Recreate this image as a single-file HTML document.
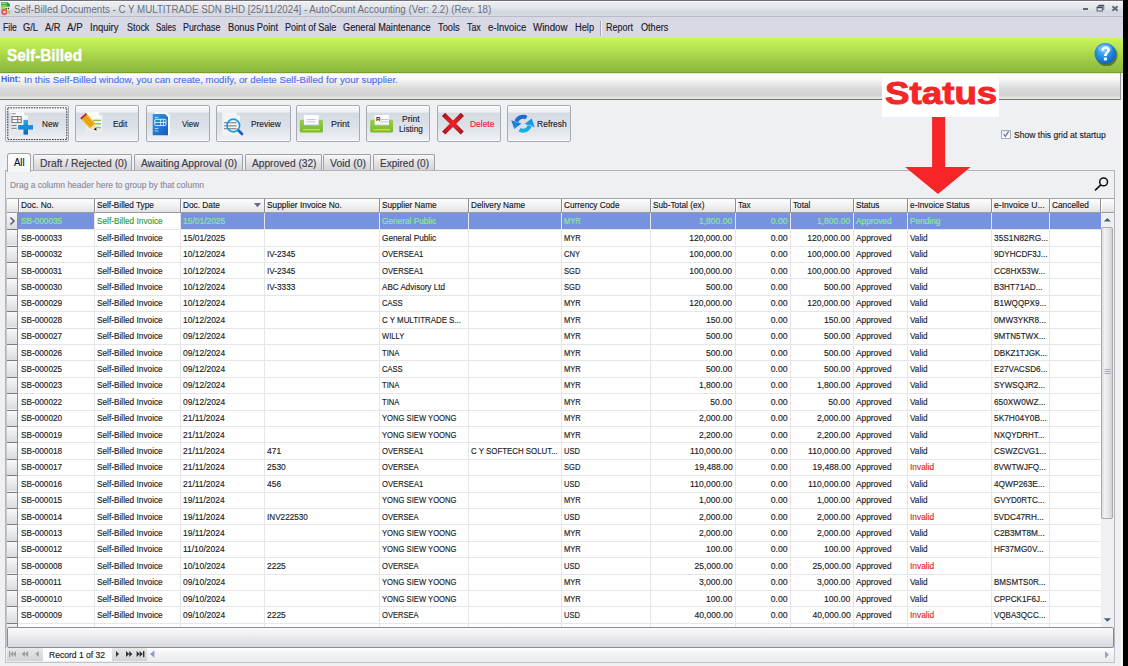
<!DOCTYPE html>
<html><head><meta charset="utf-8"><title>Self-Billed</title><style>
html,body{margin:0;padding:0;}
body{width:1128px;height:666px;overflow:hidden;position:relative;background:#eff0f3;font-family:"Liberation Sans",sans-serif;}
.a{position:absolute;}
.t{position:absolute;white-space:nowrap;line-height:normal;z-index:3;}
.g{-webkit-text-stroke:0.15px currentColor;}
svg{position:absolute;overflow:visible;}
</style></head><body>
<div class="a" style="left:0px;top:0px;width:1123px;height:17px;background:linear-gradient(#eeeff2,#e6e8ec 40%,#d2d7df 75%,#d8dce4);border-top:1px solid #6c6f78;box-sizing:border-box;border-bottom:1px solid #b8bcc6;box-shadow:inset 0 1px 0 #f8f8fa;"></div>
<div class="a" style="left:0px;top:17px;width:1123px;height:21px;background:#d9d8e5;"></div>
<div class="a" style="left:600px;top:21px;width:1px;height:15px;background:#a8a8b4;"></div>
<div class="a" style="left:601px;top:21px;width:1px;height:15px;background:#f4f4f8;"></div>
<div class="a" style="left:0px;top:38px;width:1123px;height:35px;background:linear-gradient(#c8f65a,#b4e050 35%,#9cc846 70%,#8cb93e);border-bottom:1px solid #74a032;box-sizing:border-box;"></div>
<div class="a" style="left:0px;top:73px;width:1121px;height:27px;background:linear-gradient(#ddd8e4,#fdfdfd 6%,#f6f6f6 25%,#dadada 60%,#d2d2d2 88%,#e4e4e4 94%);border-bottom:1px solid #767670;border-right:1px solid #9a9a9a;box-sizing:border-box;"></div>
<div class="a" style="left:1121px;top:99px;width:1px;height:567px;background:#fafbfc;"></div>
<div class="a" style="left:1123px;top:0px;width:5px;height:666px;background:#000;"></div>
<svg style="left:0;top:0" width="16" height="17" viewBox="0 0 16 17">
<path d="M1 2.3 H7.6 L10 4.8 V9 H1 Z" fill="#3cb04a"/>
<path d="M1.5 3 H6.5 V4 H1.5Z M1.5 5 H6.5 V6 H1.5Z" fill="#8ee07a" opacity="0.8"/>
<path d="M7.4 2.3 L10 4.9 L7.6 5.6 Z" fill="#0c8a30"/>
<path d="M1 6.2 H5 V10.5 H1Z" fill="#a6de3c"/>
<rect x="5" y="6.8" width="5" height="7.4" fill="#f4f4f4"/>
<rect x="5.6" y="7.8" width="1.3" height="1.5" fill="#333"/><rect x="7.8" y="7.8" width="1.3" height="1.5" fill="#333"/>
<circle cx="4.4" cy="12" r="2.2" fill="none" stroke="#e85858" stroke-width="1.9"/>
<rect x="7" y="10.2" width="1.2" height="3.8" fill="#f2c040"/><rect x="8.2" y="10.2" width="1" height="3.8" fill="#9cd050"/><rect x="9.2" y="10.2" width="0.9" height="3.8" fill="#80b0e0"/>
</svg>
<div class="a" style="left:1082.8px;top:8.3px;width:5px;height:1.6px;background:#5c6676;"></div>
<svg style="left:1096px;top:4px" width="9" height="8" viewBox="0 0 9 8">
<rect x="2.8" y="1.4" width="5" height="4" fill="none" stroke="#6a7484" stroke-width="1"/>
<rect x="2.8" y="0.9" width="5" height="1.3" fill="#3e4654"/>
<rect x="1" y="3.2" width="5.4" height="3.8" fill="#dfe3ea" stroke="#66707f" stroke-width="1.1"/>
<rect x="1" y="2.8" width="5.4" height="1.4" fill="#3e4654"/>
</svg>
<svg style="left:1111px;top:5px" width="8" height="7" viewBox="0 0 8 7">
<path d="M1.4 1.2 L6.6 5.8 M6.6 1.2 L1.4 5.8" stroke="#5e6a7c" stroke-width="1.9"/>
</svg>
<svg style="left:1093px;top:41px" width="28" height="28" viewBox="0 0 28 28">
<defs><radialGradient id="hg" cx="0.42" cy="0.32" r="0.75"><stop offset="0" stop-color="#5cc0ff"/><stop offset="0.6" stop-color="#1c82dc"/><stop offset="1" stop-color="#0c58b4"/></radialGradient></defs>
<circle cx="13.6" cy="14.2" r="10.9" fill="#2e4a10" opacity="0.6"/>
<circle cx="12.2" cy="12.6" r="10.6" fill="url(#hg)"/>
<ellipse cx="12" cy="7.6" rx="7" ry="4.2" fill="#ffffff" opacity="0.22"/>
<path d="M8.4 9.6 C8.4 6.4 10.4 5.2 12.6 5.2 C15 5.2 16.9 6.7 16.9 9 C16.9 11.8 13.8 12.1 13.8 15 L11 15 C11 11.6 14 11.1 14 9.2 C14 8.3 13.4 7.8 12.6 7.8 C11.6 7.8 11.1 8.5 11.1 9.6 Z" fill="#fff"/>
<rect x="10.9" y="16.6" width="3" height="2.8" fill="#fff"/>
</svg>
<div class="a" style="left:5px;top:104.8px;width:63.5px;height:36.8px;border:1px solid #a6aab2;border-radius:2px;box-sizing:border-box;background:linear-gradient(#fafbfc 0%,#eef0f3 17%,#d5dbe3 21%,#dde2e9 60%,#eef1f4 100%);box-shadow:inset 0 1px 0 #fff,inset 0 -1px 0 #fafafa;"></div>
<div class="a" style="left:75px;top:104.8px;width:64px;height:36.8px;border:1px solid #a6aab2;border-radius:2px;box-sizing:border-box;background:linear-gradient(#fafbfc 0%,#eef0f3 17%,#d5dbe3 21%,#dde2e9 60%,#eef1f4 100%);box-shadow:inset 0 1px 0 #fff,inset 0 -1px 0 #fafafa;"></div>
<div class="a" style="left:145.5px;top:104.8px;width:64.0px;height:36.8px;border:1px solid #a6aab2;border-radius:2px;box-sizing:border-box;background:linear-gradient(#fafbfc 0%,#eef0f3 17%,#d5dbe3 21%,#dde2e9 60%,#eef1f4 100%);box-shadow:inset 0 1px 0 #fff,inset 0 -1px 0 #fafafa;"></div>
<div class="a" style="left:216px;top:104.8px;width:74.5px;height:36.8px;border:1px solid #a6aab2;border-radius:2px;box-sizing:border-box;background:linear-gradient(#fafbfc 0%,#eef0f3 17%,#d5dbe3 21%,#dde2e9 60%,#eef1f4 100%);box-shadow:inset 0 1px 0 #fff,inset 0 -1px 0 #fafafa;"></div>
<div class="a" style="left:295.5px;top:104.8px;width:64.0px;height:36.8px;border:1px solid #a6aab2;border-radius:2px;box-sizing:border-box;background:linear-gradient(#fafbfc 0%,#eef0f3 17%,#d5dbe3 21%,#dde2e9 60%,#eef1f4 100%);box-shadow:inset 0 1px 0 #fff,inset 0 -1px 0 #fafafa;"></div>
<div class="a" style="left:366px;top:104.8px;width:64px;height:36.8px;border:1px solid #a6aab2;border-radius:2px;box-sizing:border-box;background:linear-gradient(#fafbfc 0%,#eef0f3 17%,#d5dbe3 21%,#dde2e9 60%,#eef1f4 100%);box-shadow:inset 0 1px 0 #fff,inset 0 -1px 0 #fafafa;"></div>
<div class="a" style="left:437px;top:104.8px;width:64px;height:36.8px;border:1px solid #a6aab2;border-radius:2px;box-sizing:border-box;background:linear-gradient(#fafbfc 0%,#eef0f3 17%,#d5dbe3 21%,#dde2e9 60%,#eef1f4 100%);box-shadow:inset 0 1px 0 #fff,inset 0 -1px 0 #fafafa;"></div>
<div class="a" style="left:507px;top:104.8px;width:64px;height:36.8px;border:1px solid #a6aab2;border-radius:2px;box-sizing:border-box;background:linear-gradient(#fafbfc 0%,#eef0f3 17%,#d5dbe3 21%,#dde2e9 60%,#eef1f4 100%);box-shadow:inset 0 1px 0 #fff,inset 0 -1px 0 #fafafa;"></div>
<svg style="left:7px;top:107px" width="61" height="34" viewBox="0 0 61 34"><rect x="0.8" y="0.8" width="59" height="31.8" fill="none" stroke="#303036" stroke-width="1" stroke-dasharray="1.6 1"/></svg>
<svg style="left:8px;top:108px" width="30" height="30" viewBox="0 0 30 30">
<defs><linearGradient id="npl" x1="0" y1="0" x2="0" y2="1"><stop offset="0" stop-color="#2aa8ea"/><stop offset="1" stop-color="#1560b8"/></linearGradient>
<linearGradient id="ndoc" x1="0" y1="0" x2="0" y2="1"><stop offset="0" stop-color="#fafafa"/><stop offset="1" stop-color="#e2e4e6"/></linearGradient></defs>
<path d="M2.7 4 H16.5 L19.8 7.3 V27.5 H2.7 Z" fill="url(#ndoc)"/>
<path d="M16.5 4 V7.3 H19.8 Z" fill="#d0d2d4"/>
<rect x="3.4" y="5.2" width="4.3" height="1" fill="#8a8a8a"/>
<rect x="3.9" y="8.6" width="9.3" height="6" fill="#fff" stroke="#6e6e6e" stroke-width="1"/>
<rect x="3.9" y="11.2" width="9.3" height="0.9" fill="#6e6e6e"/>
<rect x="9.3" y="8.6" width="0.9" height="6" fill="#6e6e6e"/>
<rect x="3.4" y="17" width="5.2" height="1" fill="#7a7a7a"/>
<rect x="3.4" y="19.8" width="5.2" height="1" fill="#7a7a7a"/>
<rect x="15.5" y="11.9" width="4.5" height="14.7" fill="url(#npl)"/>
<rect x="10.1" y="17.1" width="14.9" height="4.5" fill="#1f8ad8"/>
</svg>
<svg style="left:77px;top:108px" width="30" height="30" viewBox="0 0 30 30">
<defs><linearGradient id="edoc" x1="0" y1="0" x2="0" y2="1"><stop offset="0" stop-color="#fcfcfc"/><stop offset="1" stop-color="#e6e8ea"/></linearGradient></defs>
<path d="M9 4 H22 L25.2 7.2 V26.6 H9 Z" fill="url(#edoc)"/>
<path d="M22 4 V7.2 H25.2 Z" fill="#d8dadc"/>
<rect x="16.2" y="11.7" width="7.7" height="1.4" fill="#8cc060"/>
<rect x="16.2" y="15.1" width="7.7" height="1.4" fill="#8cc060"/>
<rect x="16.2" y="18.9" width="7.7" height="1.4" fill="#8cc060"/>
<g transform="translate(6.1,7.45) rotate(48)">
<rect x="1.8" y="-3.8" width="12.4" height="7.6" fill="#f2b414"/>
<rect x="1.8" y="-1.5" width="12.4" height="0.9" fill="#d08c08"/>
<rect x="1.8" y="1.0" width="12.4" height="0.9" fill="#d08c08"/>
<rect x="0" y="-3.8" width="1.9" height="7.6" fill="#c41e28"/>
<path d="M14.2 -3.8 L20 0 L14.2 3.8 Z" fill="#f2deb0"/>
<path d="M17.6 -1.6 L20.2 0 L17.6 1.6 Z" fill="#111"/>
</g>
</svg>
<svg style="left:148px;top:108px" width="30" height="30" viewBox="0 0 30 30">
<defs><linearGradient id="vdoc" x1="0" y1="0" x2="1" y2="1"><stop offset="0" stop-color="#2a9ee4"/><stop offset="1" stop-color="#1a58bc"/></linearGradient></defs>
<path d="M6.8 4.3 H19 L22 7.3 V27 H6.8 Z" fill="#fbfbfb"/>
<path d="M4.7 5.9 H16.9 L20 9 V27.3 H4.7 Z" fill="url(#vdoc)"/>
<rect x="6.8" y="9.2" width="3.5" height="0.8" fill="#cfe8fa"/>
<rect x="6.8" y="11.3" width="11.2" height="6.3" rx="1" fill="none" stroke="#e8f4fc" stroke-width="0.9"/>
<rect x="6.8" y="14.2" width="11.2" height="0.8" fill="#e8f4fc"/>
<rect x="12.3" y="11.3" width="0.8" height="6.3" fill="#e8f4fc"/>
<rect x="15.2" y="11.3" width="0.8" height="6.3" fill="#e8f4fc"/>
<rect x="6.8" y="20.2" width="3.5" height="0.8" fill="#cfe8fa"/>
<rect x="6.8" y="22.6" width="3.5" height="0.8" fill="#cfe8fa"/>
</svg>
<svg style="left:218px;top:108px" width="30" height="30" viewBox="0 0 30 30">
<path d="M4.3 4 H18.5 L22 7.5 V27.5 H4.3 Z" fill="#f3f4f5"/>
<path d="M18.5 4 V7.5 H22 Z" fill="#dcdee0"/>
<rect x="5.9" y="14" width="12.6" height="1.3" fill="#909090"/>
<rect x="5.9" y="17.2" width="12.6" height="1.3" fill="#909090"/>
<rect x="5.9" y="20" width="12.6" height="1.3" fill="#909090"/>
<line x1="20" y1="22" x2="24" y2="26" stroke="#1a5ec0" stroke-width="2.6" stroke-linecap="round"/>
<circle cx="15.3" cy="17.5" r="6.3" fill="none" stroke="#1e9ae2" stroke-width="1.7"/>
</svg>
<svg style="left:296px;top:108px" width="30" height="30" viewBox="0 0 30 30"><defs><linearGradient id="pg1" x1="0" y1="0" x2="0" y2="1"><stop offset="0" stop-color="#94ce48"/><stop offset="1" stop-color="#78b830"/></linearGradient></defs>
<rect x="3.8" y="11.7" width="23.2" height="12.8" rx="1.5" fill="url(#pg1)"/>
<rect x="7.9" y="7" width="14.8" height="10.1" fill="#fbfbfd"/>
<rect x="7.9" y="16.2" width="14.8" height="0.9" fill="#e0dcf0"/>
<rect x="10.8" y="11" width="9" height="1" fill="#c8c8c8"/>
<rect x="10.8" y="13.3" width="9" height="1" fill="#c8c8c8"/>
<rect x="7" y="21" width="16.9" height="1.3" fill="#d4e02a"/></svg>
<svg style="left:367px;top:108px" width="30" height="30" viewBox="0 0 30 30"><defs><linearGradient id="pg2" x1="0" y1="0" x2="0" y2="1"><stop offset="0" stop-color="#94ce48"/><stop offset="1" stop-color="#78b830"/></linearGradient></defs>
<rect x="3.2" y="11.7" width="22.9" height="12.8" rx="1.5" fill="url(#pg2)"/>
<rect x="7.7" y="7" width="14.3" height="10.1" fill="#fbfbfd"/>
<rect x="7.7" y="16.2" width="14.3" height="0.9" fill="#e0dcf0"/>
<rect x="12.5" y="11" width="9" height="1" fill="#c8c8c8"/>
<rect x="12.5" y="13.3" width="9" height="1" fill="#c8c8c8"/>
<rect x="6.2" y="21" width="16.8" height="1.3" fill="#d4e02a"/><text x="9" y="12.6" font-family="Liberation Sans" font-weight="bold" font-size="6" fill="#222">R</text></svg>
<svg style="left:438px;top:108px" width="30" height="30" viewBox="0 0 30 30">
<defs><radialGradient id="xg" cx="0.5" cy="0.5" r="0.6"><stop offset="0" stop-color="#f02428"/><stop offset="1" stop-color="#a8141c"/></radialGradient></defs>
<path d="M7.1 4.7 L15 12.6 L22.8 4.8 L26 8 L18.2 15.8 L25.8 23.4 L22.6 26.6 L15 19 L7.3 26.6 L4.1 23.4 L11.8 15.8 L3.9 7.9 Z" fill="url(#xg)"/>
</svg>
<svg style="left:508px;top:108px" width="30" height="30" viewBox="0 0 30 30">
<defs><linearGradient id="rg1" x1="0" y1="0" x2="0" y2="1"><stop offset="0" stop-color="#1c64cc"/><stop offset="1" stop-color="#1a90e0"/></linearGradient>
<linearGradient id="rg2" x1="0" y1="1" x2="0" y2="0"><stop offset="0" stop-color="#14b4f2"/><stop offset="1" stop-color="#1890e0"/></linearGradient></defs>
<path d="M19.5 7.91 A9 9 0 0 0 6.2 13.83 L10.11 14.66 A5 5 0 0 1 17.5 11.37 Z M3.2 12.2 L13.5 15.5 L6.3 21 Z" fill="url(#rg1)"/>
<path d="M10.5 23.49 A9 9 0 0 0 23.8 17.57 L19.89 16.74 A5 5 0 0 1 12.5 20.03 Z M26.8 19.2 L16.5 15.9 L23.7 10.4 Z" fill="url(#rg2)"/>
</svg>
<div class="a" style="left:7.4px;top:152.6px;width:24.0px;height:19px;background:linear-gradient(#ffffff,#f4f5f7);border:1px solid #a4a4a8;border-bottom:none;border-radius:3px 3px 0 0;box-sizing:border-box;z-index:2;"></div>
<div class="a" style="left:33.2px;top:154.4px;width:99.2px;height:16.3px;background:linear-gradient(#f8f8f9,#e4e4e6 45%,#d2d2d6);border:1px solid #a0a0a6;border-bottom:none;border-radius:2px 2px 0 0;box-sizing:border-box;"></div>
<div class="a" style="left:134.3px;top:154.4px;width:109.1px;height:16.3px;background:linear-gradient(#f8f8f9,#e4e4e6 45%,#d2d2d6);border:1px solid #a0a0a6;border-bottom:none;border-radius:2px 2px 0 0;box-sizing:border-box;"></div>
<div class="a" style="left:245.2px;top:154.4px;width:76.5px;height:16.3px;background:linear-gradient(#f8f8f9,#e4e4e6 45%,#d2d2d6);border:1px solid #a0a0a6;border-bottom:none;border-radius:2px 2px 0 0;box-sizing:border-box;"></div>
<div class="a" style="left:323px;top:154.4px;width:48.30000000000001px;height:16.3px;background:linear-gradient(#f8f8f9,#e4e4e6 45%,#d2d2d6);border:1px solid #a0a0a6;border-bottom:none;border-radius:2px 2px 0 0;box-sizing:border-box;"></div>
<div class="a" style="left:373px;top:154.4px;width:62.19999999999999px;height:16.3px;background:linear-gradient(#f8f8f9,#e4e4e6 45%,#d2d2d6);border:1px solid #a0a0a6;border-bottom:none;border-radius:2px 2px 0 0;box-sizing:border-box;"></div>
<div class="a" style="left:1001.3px;top:129.8px;width:9.3px;height:9.2px;border:1px solid #aab0b8;background:linear-gradient(#e4e8ee,#ffffff);box-sizing:border-box;"></div>
<svg style="left:1001px;top:129px" width="10" height="10" viewBox="0 0 10 10"><path d="M2.6 5 L4.4 7.4 L7.6 2.4" fill="none" stroke="#5a78b8" stroke-width="1.2"/></svg>
<div class="a" style="left:5.3px;top:170.3px;width:1110px;height:457.5px;background:#eff0f3;border:1px solid #b4b4b8;border-bottom:none;box-sizing:border-box;"></div>
<svg style="left:1092px;top:174px" width="18" height="18" viewBox="0 0 18 18"><circle cx="11.6" cy="7.9" r="3.9" fill="none" stroke="#111" stroke-width="1.5"/><line x1="8.8" y1="10.8" x2="3" y2="16.4" stroke="#111" stroke-width="1.6"/></svg>
<div class="a" style="left:5.3px;top:197.5px;width:2px;height:450px;background:linear-gradient(90deg,#a9a9ad,#cfd0d4);"></div>
<div class="a" style="left:7px;top:197.5px;width:1107px;height:15.5px;background:linear-gradient(#fdfdfd,#f2f2f3 50%,#e2e2e4);border-top:1px solid #a6a6aa;border-bottom:1px solid #9c9ca0;box-sizing:border-box;"></div>
<div class="a" style="left:18px;top:213px;width:1082.5px;height:414px;background:#ffffff;"></div>
<div class="a" style="left:7.2px;top:213px;width:10.8px;height:16.099999999999994px;background:linear-gradient(#f8f8f9,#dadbde);"></div>
<div class="a" style="left:7.2px;top:229.1px;width:10.8px;height:1px;background:#7c7c80;"></div>
<div class="a" style="left:18px;top:229.1px;width:1082.5px;height:1px;background:#e6e6e8;"></div>
<div class="a" style="left:7.2px;top:230.1px;width:10.8px;height:15.400000000000006px;background:linear-gradient(#f8f8f9,#dadbde);"></div>
<div class="a" style="left:7.2px;top:245.5px;width:10.8px;height:1px;background:#7c7c80;"></div>
<div class="a" style="left:18px;top:245.5px;width:1082.5px;height:1px;background:#e6e6e8;"></div>
<div class="a" style="left:7.2px;top:246.5px;width:10.8px;height:15.399999999999977px;background:linear-gradient(#f8f8f9,#dadbde);"></div>
<div class="a" style="left:7.2px;top:261.9px;width:10.8px;height:1px;background:#7c7c80;"></div>
<div class="a" style="left:18px;top:261.9px;width:1082.5px;height:1px;background:#e6e6e8;"></div>
<div class="a" style="left:7.2px;top:262.9px;width:10.8px;height:15.400000000000034px;background:linear-gradient(#f8f8f9,#dadbde);"></div>
<div class="a" style="left:7.2px;top:278.3px;width:10.8px;height:1px;background:#7c7c80;"></div>
<div class="a" style="left:18px;top:278.3px;width:1082.5px;height:1px;background:#e6e6e8;"></div>
<div class="a" style="left:7.2px;top:279.3px;width:10.8px;height:15.399999999999977px;background:linear-gradient(#f8f8f9,#dadbde);"></div>
<div class="a" style="left:7.2px;top:294.7px;width:10.8px;height:1px;background:#7c7c80;"></div>
<div class="a" style="left:18px;top:294.7px;width:1082.5px;height:1px;background:#e6e6e8;"></div>
<div class="a" style="left:7.2px;top:295.7px;width:10.8px;height:15.400000000000034px;background:linear-gradient(#f8f8f9,#dadbde);"></div>
<div class="a" style="left:7.2px;top:311.1px;width:10.8px;height:1px;background:#7c7c80;"></div>
<div class="a" style="left:18px;top:311.1px;width:1082.5px;height:1px;background:#e6e6e8;"></div>
<div class="a" style="left:7.2px;top:312.1px;width:10.8px;height:15.399999999999977px;background:linear-gradient(#f8f8f9,#dadbde);"></div>
<div class="a" style="left:7.2px;top:327.5px;width:10.8px;height:1px;background:#7c7c80;"></div>
<div class="a" style="left:18px;top:327.5px;width:1082.5px;height:1px;background:#e6e6e8;"></div>
<div class="a" style="left:7.2px;top:328.5px;width:10.8px;height:15.399999999999977px;background:linear-gradient(#f8f8f9,#dadbde);"></div>
<div class="a" style="left:7.2px;top:343.9px;width:10.8px;height:1px;background:#7c7c80;"></div>
<div class="a" style="left:18px;top:343.9px;width:1082.5px;height:1px;background:#e6e6e8;"></div>
<div class="a" style="left:7.2px;top:344.9px;width:10.8px;height:15.399999999999977px;background:linear-gradient(#f8f8f9,#dadbde);"></div>
<div class="a" style="left:7.2px;top:360.29999999999995px;width:10.8px;height:1px;background:#7c7c80;"></div>
<div class="a" style="left:18px;top:360.29999999999995px;width:1082.5px;height:1px;background:#e6e6e8;"></div>
<div class="a" style="left:7.2px;top:361.29999999999995px;width:10.8px;height:15.400000000000034px;background:linear-gradient(#f8f8f9,#dadbde);"></div>
<div class="a" style="left:7.2px;top:376.7px;width:10.8px;height:1px;background:#7c7c80;"></div>
<div class="a" style="left:18px;top:376.7px;width:1082.5px;height:1px;background:#e6e6e8;"></div>
<div class="a" style="left:7.2px;top:377.7px;width:10.8px;height:15.400000000000034px;background:linear-gradient(#f8f8f9,#dadbde);"></div>
<div class="a" style="left:7.2px;top:393.1px;width:10.8px;height:1px;background:#7c7c80;"></div>
<div class="a" style="left:18px;top:393.1px;width:1082.5px;height:1px;background:#e6e6e8;"></div>
<div class="a" style="left:7.2px;top:394.1px;width:10.8px;height:15.399999999999977px;background:linear-gradient(#f8f8f9,#dadbde);"></div>
<div class="a" style="left:7.2px;top:409.5px;width:10.8px;height:1px;background:#7c7c80;"></div>
<div class="a" style="left:18px;top:409.5px;width:1082.5px;height:1px;background:#e6e6e8;"></div>
<div class="a" style="left:7.2px;top:410.5px;width:10.8px;height:15.399999999999977px;background:linear-gradient(#f8f8f9,#dadbde);"></div>
<div class="a" style="left:7.2px;top:425.9px;width:10.8px;height:1px;background:#7c7c80;"></div>
<div class="a" style="left:18px;top:425.9px;width:1082.5px;height:1px;background:#e6e6e8;"></div>
<div class="a" style="left:7.2px;top:426.9px;width:10.8px;height:15.399999999999977px;background:linear-gradient(#f8f8f9,#dadbde);"></div>
<div class="a" style="left:7.2px;top:442.29999999999995px;width:10.8px;height:1px;background:#7c7c80;"></div>
<div class="a" style="left:18px;top:442.29999999999995px;width:1082.5px;height:1px;background:#e6e6e8;"></div>
<div class="a" style="left:7.2px;top:443.29999999999995px;width:10.8px;height:15.399999999999977px;background:linear-gradient(#f8f8f9,#dadbde);"></div>
<div class="a" style="left:7.2px;top:458.69999999999993px;width:10.8px;height:1px;background:#7c7c80;"></div>
<div class="a" style="left:18px;top:458.69999999999993px;width:1082.5px;height:1px;background:#e6e6e8;"></div>
<div class="a" style="left:7.2px;top:459.69999999999993px;width:10.8px;height:15.400000000000034px;background:linear-gradient(#f8f8f9,#dadbde);"></div>
<div class="a" style="left:7.2px;top:475.09999999999997px;width:10.8px;height:1px;background:#7c7c80;"></div>
<div class="a" style="left:18px;top:475.09999999999997px;width:1082.5px;height:1px;background:#e6e6e8;"></div>
<div class="a" style="left:7.2px;top:476.09999999999997px;width:10.8px;height:15.400000000000034px;background:linear-gradient(#f8f8f9,#dadbde);"></div>
<div class="a" style="left:7.2px;top:491.5px;width:10.8px;height:1px;background:#7c7c80;"></div>
<div class="a" style="left:18px;top:491.5px;width:1082.5px;height:1px;background:#e6e6e8;"></div>
<div class="a" style="left:7.2px;top:492.5px;width:10.8px;height:15.399999999999977px;background:linear-gradient(#f8f8f9,#dadbde);"></div>
<div class="a" style="left:7.2px;top:507.9px;width:10.8px;height:1px;background:#7c7c80;"></div>
<div class="a" style="left:18px;top:507.9px;width:1082.5px;height:1px;background:#e6e6e8;"></div>
<div class="a" style="left:7.2px;top:508.9px;width:10.8px;height:15.399999999999977px;background:linear-gradient(#f8f8f9,#dadbde);"></div>
<div class="a" style="left:7.2px;top:524.3px;width:10.8px;height:1px;background:#7c7c80;"></div>
<div class="a" style="left:18px;top:524.3px;width:1082.5px;height:1px;background:#e6e6e8;"></div>
<div class="a" style="left:7.2px;top:525.3px;width:10.8px;height:15.399999999999977px;background:linear-gradient(#f8f8f9,#dadbde);"></div>
<div class="a" style="left:7.2px;top:540.6999999999999px;width:10.8px;height:1px;background:#7c7c80;"></div>
<div class="a" style="left:18px;top:540.6999999999999px;width:1082.5px;height:1px;background:#e6e6e8;"></div>
<div class="a" style="left:7.2px;top:541.6999999999999px;width:10.8px;height:15.400000000000091px;background:linear-gradient(#f8f8f9,#dadbde);"></div>
<div class="a" style="left:7.2px;top:557.1px;width:10.8px;height:1px;background:#7c7c80;"></div>
<div class="a" style="left:18px;top:557.1px;width:1082.5px;height:1px;background:#e6e6e8;"></div>
<div class="a" style="left:7.2px;top:558.1px;width:10.8px;height:15.399999999999977px;background:linear-gradient(#f8f8f9,#dadbde);"></div>
<div class="a" style="left:7.2px;top:573.5px;width:10.8px;height:1px;background:#7c7c80;"></div>
<div class="a" style="left:18px;top:573.5px;width:1082.5px;height:1px;background:#e6e6e8;"></div>
<div class="a" style="left:7.2px;top:574.5px;width:10.8px;height:15.399999999999977px;background:linear-gradient(#f8f8f9,#dadbde);"></div>
<div class="a" style="left:7.2px;top:589.9px;width:10.8px;height:1px;background:#7c7c80;"></div>
<div class="a" style="left:18px;top:589.9px;width:1082.5px;height:1px;background:#e6e6e8;"></div>
<div class="a" style="left:7.2px;top:590.9px;width:10.8px;height:15.399999999999977px;background:linear-gradient(#f8f8f9,#dadbde);"></div>
<div class="a" style="left:7.2px;top:606.3px;width:10.8px;height:1px;background:#7c7c80;"></div>
<div class="a" style="left:18px;top:606.3px;width:1082.5px;height:1px;background:#e6e6e8;"></div>
<div class="a" style="left:7.2px;top:607.3px;width:10.8px;height:15.399999999999977px;background:linear-gradient(#f8f8f9,#dadbde);"></div>
<div class="a" style="left:7.2px;top:622.6999999999999px;width:10.8px;height:1px;background:#7c7c80;"></div>
<div class="a" style="left:18px;top:622.6999999999999px;width:1082.5px;height:1px;background:#e6e6e8;"></div>
<div class="a" style="left:7.2px;top:624.6999999999999px;width:10.8px;height:2.800000000000068px;background:linear-gradient(#f8f8f9,#dadbde);"></div>
<div class="a" style="left:17px;top:213px;width:1px;height:414.5px;background:#8c8c90;"></div>
<div class="a" style="left:18px;top:213px;width:1082.5px;height:16px;background:#7893de;"></div>
<div class="a" style="left:95px;top:213px;width:85px;height:16px;background:#ffffff;"></div>
<div class="a" style="left:94px;top:213px;width:1px;height:414.5px;background:#e6e6e8;"></div>
<div class="a" style="left:180px;top:213px;width:1px;height:414.5px;background:#e6e6e8;"></div>
<div class="a" style="left:264px;top:213px;width:1px;height:414.5px;background:#e6e6e8;"></div>
<div class="a" style="left:379px;top:213px;width:1px;height:414.5px;background:#e6e6e8;"></div>
<div class="a" style="left:468px;top:213px;width:1px;height:414.5px;background:#e6e6e8;"></div>
<div class="a" style="left:561px;top:213px;width:1px;height:414.5px;background:#e6e6e8;"></div>
<div class="a" style="left:650px;top:213px;width:1px;height:414.5px;background:#e6e6e8;"></div>
<div class="a" style="left:735px;top:213px;width:1px;height:414.5px;background:#e6e6e8;"></div>
<div class="a" style="left:790px;top:213px;width:1px;height:414.5px;background:#e6e6e8;"></div>
<div class="a" style="left:853px;top:213px;width:1px;height:414.5px;background:#e6e6e8;"></div>
<div class="a" style="left:907px;top:213px;width:1px;height:414.5px;background:#e6e6e8;"></div>
<div class="a" style="left:991px;top:213px;width:1px;height:414.5px;background:#e6e6e8;"></div>
<div class="a" style="left:1049px;top:213px;width:1px;height:414.5px;background:#e6e6e8;"></div>
<div class="a" style="left:18px;top:198.5px;width:1px;height:13.5px;background:#8e8e92;"></div>
<div class="a" style="left:19px;top:198.5px;width:1px;height:13.5px;background:#ffffff;"></div>
<div class="a" style="left:94px;top:198.5px;width:1px;height:13.5px;background:#8e8e92;"></div>
<div class="a" style="left:95px;top:198.5px;width:1px;height:13.5px;background:#ffffff;"></div>
<div class="a" style="left:180px;top:198.5px;width:1px;height:13.5px;background:#8e8e92;"></div>
<div class="a" style="left:181px;top:198.5px;width:1px;height:13.5px;background:#ffffff;"></div>
<div class="a" style="left:264px;top:198.5px;width:1px;height:13.5px;background:#8e8e92;"></div>
<div class="a" style="left:265px;top:198.5px;width:1px;height:13.5px;background:#ffffff;"></div>
<div class="a" style="left:379px;top:198.5px;width:1px;height:13.5px;background:#8e8e92;"></div>
<div class="a" style="left:380px;top:198.5px;width:1px;height:13.5px;background:#ffffff;"></div>
<div class="a" style="left:468px;top:198.5px;width:1px;height:13.5px;background:#8e8e92;"></div>
<div class="a" style="left:469px;top:198.5px;width:1px;height:13.5px;background:#ffffff;"></div>
<div class="a" style="left:561px;top:198.5px;width:1px;height:13.5px;background:#8e8e92;"></div>
<div class="a" style="left:562px;top:198.5px;width:1px;height:13.5px;background:#ffffff;"></div>
<div class="a" style="left:650px;top:198.5px;width:1px;height:13.5px;background:#8e8e92;"></div>
<div class="a" style="left:651px;top:198.5px;width:1px;height:13.5px;background:#ffffff;"></div>
<div class="a" style="left:735px;top:198.5px;width:1px;height:13.5px;background:#8e8e92;"></div>
<div class="a" style="left:736px;top:198.5px;width:1px;height:13.5px;background:#ffffff;"></div>
<div class="a" style="left:790px;top:198.5px;width:1px;height:13.5px;background:#8e8e92;"></div>
<div class="a" style="left:791px;top:198.5px;width:1px;height:13.5px;background:#ffffff;"></div>
<div class="a" style="left:853px;top:198.5px;width:1px;height:13.5px;background:#8e8e92;"></div>
<div class="a" style="left:854px;top:198.5px;width:1px;height:13.5px;background:#ffffff;"></div>
<div class="a" style="left:907px;top:198.5px;width:1px;height:13.5px;background:#8e8e92;"></div>
<div class="a" style="left:908px;top:198.5px;width:1px;height:13.5px;background:#ffffff;"></div>
<div class="a" style="left:991px;top:198.5px;width:1px;height:13.5px;background:#8e8e92;"></div>
<div class="a" style="left:992px;top:198.5px;width:1px;height:13.5px;background:#ffffff;"></div>
<div class="a" style="left:1049px;top:198.5px;width:1px;height:13.5px;background:#8e8e92;"></div>
<div class="a" style="left:1050px;top:198.5px;width:1px;height:13.5px;background:#ffffff;"></div>
<div class="a" style="left:1100px;top:198.5px;width:1px;height:13.5px;background:#8e8e92;"></div>
<div class="a" style="left:1101px;top:198.5px;width:1px;height:13.5px;background:#ffffff;"></div>
<svg style="left:253px;top:202px" width="10" height="7" viewBox="0 0 10 7"><path d="M0.9 1 H8 L4.45 5.2 Z" fill="#6a6890"/></svg>
<svg style="left:8px;top:216px" width="9" height="10" viewBox="0 0 9 10"><path d="M2.5 1.5 L6 5 L2.5 8.5" fill="none" stroke="#5a5878" stroke-width="1.5"/></svg>
<div class="a" style="left:1100.5px;top:213px;width:13.5px;height:414.5px;background:#f0f0f2;"></div>
<svg style="left:1101px;top:215px" width="13" height="10" viewBox="0 0 13 10"><path d="M2.8 6.6 H10 L6.4 3 Z" fill="#4a5a80"/></svg>
<svg style="left:1101px;top:615px" width="13" height="10" viewBox="0 0 13 10"><path d="M2.8 3.2 H10 L6.4 6.8 Z" fill="#4a5a80"/></svg>
<div class="a" style="left:1101.3px;top:226.8px;width:11.6px;height:292.7px;background:linear-gradient(90deg,#d8d8de,#f2f2f4 25%,#e4e4e8 70%,#cfd0d6);border:1px solid #a8a8b0;border-radius:2px;box-sizing:border-box;"></div>
<svg style="left:1101px;top:368px" width="13" height="8" viewBox="0 0 13 8"><path d="M3.5 1.5 H9.5 M3.5 3.5 H9.5 M3.5 5.5 H9.5" stroke="#9a9aa4" stroke-width="0.8"/></svg>
<div class="a" style="left:1114px;top:197.5px;width:1.3px;height:450px;background:#b4b4b8;"></div>
<div class="a" style="left:7px;top:627.3px;width:1107px;height:20.3px;background:linear-gradient(#fafafb,#ebebee 45%,#d8dadf);border:1px solid #8c8c90;border-radius:2px;box-sizing:border-box;"></div>
<div class="a" style="left:5.3px;top:647.6px;width:1110px;height:15px;background:linear-gradient(#ffffff,#f4f4f4 30%,#ececec);border:1px solid #c4c4c8;border-top:none;box-sizing:border-box;"></div>
<div class="a" style="left:7px;top:648px;width:36px;height:13px;background:linear-gradient(#e8e8ea,#d4d4d8);"></div>
<div class="a" style="left:43px;top:648px;width:68.5px;height:13px;background:#ffffff;"></div>
<div class="a" style="left:111.5px;top:648px;width:35px;height:13px;background:linear-gradient(#e8e8ea,#d4d4d8);"></div>
<svg style="left:7px;top:648px" width="150" height="12" viewBox="0 0 150 12">
<rect x="2" y="3.1" width="1.3" height="6" fill="#9c9ca6"/><path d="M3.3 6.1 L6.2 3.1 V9.1Z M6.1 6.1 L9 3.1 V9.1Z" fill="#9c9ca6"/>
<path d="M14.7 6.1 L17.9 3.1 V9.1Z M17.9 6.1 L21.1 3.1 V9.1Z" fill="#9c9ca6"/>
<path d="M28.2 6.1 L31.8 3.1 V9.1Z" fill="#9c9ca6"/>
<path d="M109 3.1 L112 6.1 L109 9.1Z" fill="#30303c"/>
<path d="M119 3.1 L122.2 6.1 L119 9.1Z M122.2 3.1 L125.4 6.1 L122.2 9.1Z" fill="#30303c"/>
<path d="M129.6 3.1 L132.6 6.1 L129.6 9.1Z M132.6 3.1 L135.8 6.1 L132.6 9.1Z" fill="#30303c"/><rect x="136" y="3.1" width="1.4" height="6" fill="#30303c"/>
<path d="M147.4 2.4 L143 6.1 L147.4 9.8Z" fill="#8a9ad2"/>
</svg>
<svg style="left:1101px;top:649px" width="12" height="12" viewBox="0 0 12 12"><path d="M4 2 L8 5.8 L4 9.6Z" fill="#9aa6d0"/></svg>
<div class="a" style="left:882.1px;top:74.9px;width:116.8px;height:42px;background:#ffffff;z-index:5;"></div>
<svg style="left:900px;top:116px;z-index:6" width="76" height="80" viewBox="900 116 76 80"><path d="M932.1 116.9 H945.2 V167 H970.6 L938 194 L905.1 167 H932.1 Z" fill="#f52528"/></svg>
<div class="t g" style="top:4.00px;font-size:10px;line-height:11.17px;color:#6c6f80;left:14.20px;transform:scaleX(0.9740);transform-origin:left top;-webkit-text-stroke:0;">Self-Billed Documents - C Y MULTITRADE SDN BHD [25/11/2024] - AutoCount Accounting (Ver: 2.2) (Rev: 18)</div>
<div class="t g" style="top:22.00px;font-size:10px;line-height:11.17px;color:#20202c;left:2.50px;transform:scaleX(0.8564);transform-origin:left top;">File</div>
<div class="t g" style="top:22.00px;font-size:10px;line-height:11.17px;color:#20202c;left:23.00px;transform:scaleX(0.9306);transform-origin:left top;">G/L</div>
<div class="t g" style="top:22.00px;font-size:10px;line-height:11.17px;color:#20202c;left:45.00px;transform:scaleX(0.9358);transform-origin:left top;">A/R</div>
<div class="t g" style="top:22.00px;font-size:10px;line-height:11.17px;color:#20202c;left:67.40px;transform:scaleX(0.9679);transform-origin:left top;">A/P</div>
<div class="t g" style="top:22.00px;font-size:10px;line-height:11.17px;color:#20202c;left:90.40px;transform:scaleX(0.9462);transform-origin:left top;">Inquiry</div>
<div class="t g" style="top:22.00px;font-size:10px;line-height:11.17px;color:#20202c;left:126.60px;transform:scaleX(0.8917);transform-origin:left top;">Stock</div>
<div class="t g" style="top:22.00px;font-size:10px;line-height:11.17px;color:#20202c;left:156.00px;transform:scaleX(0.7955);transform-origin:left top;">Sales</div>
<div class="t g" style="top:22.00px;font-size:10px;line-height:11.17px;color:#20202c;left:183.30px;transform:scaleX(0.8829);transform-origin:left top;">Purchase</div>
<div class="t g" style="top:22.00px;font-size:10px;line-height:11.17px;color:#20202c;left:227.70px;transform:scaleX(0.9272);transform-origin:left top;">Bonus Point</div>
<div class="t g" style="top:22.00px;font-size:10px;line-height:11.17px;color:#20202c;left:284.80px;transform:scaleX(0.9065);transform-origin:left top;">Point of Sale</div>
<div class="t g" style="top:22.00px;font-size:10px;line-height:11.17px;color:#20202c;left:343.30px;transform:scaleX(0.9162);transform-origin:left top;">General Maintenance</div>
<div class="t g" style="top:22.00px;font-size:10px;line-height:11.17px;color:#20202c;left:437.90px;transform:scaleX(0.9295);transform-origin:left top;">Tools</div>
<div class="t g" style="top:22.00px;font-size:10px;line-height:11.17px;color:#20202c;left:466.70px;transform:scaleX(0.8868);transform-origin:left top;">Tax</div>
<div class="t g" style="top:22.00px;font-size:10px;line-height:11.17px;color:#20202c;left:487.60px;transform:scaleX(0.9439);transform-origin:left top;">e-Invoice</div>
<div class="t g" style="top:22.00px;font-size:10px;line-height:11.17px;color:#20202c;left:533.00px;transform:scaleX(0.9672);transform-origin:left top;">Window</div>
<div class="t g" style="top:22.00px;font-size:10px;line-height:11.17px;color:#20202c;left:574.50px;transform:scaleX(0.9287);transform-origin:left top;">Help</div>
<div class="t g" style="top:22.00px;font-size:10px;line-height:11.17px;color:#20202c;left:606.40px;transform:scaleX(0.8962);transform-origin:left top;">Report</div>
<div class="t g" style="top:22.00px;font-size:10px;line-height:11.17px;color:#20202c;left:640.80px;transform:scaleX(0.9097);transform-origin:left top;">Others</div>
<div class="t" style="top:46.00px;font-size:16.5px;line-height:18.43px;color:#ffffff;font-weight:bold;left:7.30px;transform:scaleX(0.9296);transform-origin:left top;-webkit-text-stroke:0.4px #fff;">Self-Billed</div>
<div class="t" style="top:74.00px;font-size:9.6px;line-height:10.72px;color:#3b62d8;font-weight:bold;left:1.10px;transform:scaleX(0.8927);transform-origin:left top;">Hint:</div>
<div class="t g" style="top:75.00px;font-size:9.8px;line-height:10.95px;color:#4a72e8;left:24.10px;transform:scaleX(0.9925);transform-origin:left top;">In this Self-Billed window, you can create, modify, or delete Self-Billed for your supplier.</div>
<div class="t g" style="top:119.00px;font-size:9.8px;line-height:10.95px;color:#1c1c2a;left:42.00px;transform:scaleX(0.8317);transform-origin:left top;">New</div>
<div class="t g" style="top:119.00px;font-size:9.8px;line-height:10.95px;color:#1c1c2a;left:113.00px;transform:scaleX(0.8412);transform-origin:left top;">Edit</div>
<div class="t g" style="top:119.00px;font-size:9.8px;line-height:10.95px;color:#1c1c2a;left:181.90px;transform:scaleX(0.8026);transform-origin:left top;">View</div>
<div class="t g" style="top:119.00px;font-size:9.8px;line-height:10.95px;color:#1c1c2a;left:251.00px;transform:scaleX(0.8524);transform-origin:left top;">Preview</div>
<div class="t g" style="top:119.00px;font-size:9.8px;line-height:10.95px;color:#1c1c2a;left:331.00px;transform:scaleX(0.9184);transform-origin:left top;">Print</div>
<div class="t g" style="top:114.00px;font-size:9.8px;line-height:10.95px;color:#1c1c2a;left:402.00px;transform:scaleX(0.8687);transform-origin:left top;">Print</div>
<div class="t g" style="top:124.00px;font-size:9.8px;line-height:10.95px;color:#1c1c2a;left:398.60px;transform:scaleX(0.8404);transform-origin:left top;">Listing</div>
<div class="t g" style="top:119.00px;font-size:9.8px;line-height:10.95px;color:#e8202a;left:469.80px;transform:scaleX(0.8616);transform-origin:left top;">Delete</div>
<div class="t g" style="top:119.00px;font-size:9.8px;line-height:10.95px;color:#1c1c2a;left:536.90px;transform:scaleX(0.8687);transform-origin:left top;">Refresh</div>
<div class="t g" style="top:157.00px;font-size:10.6px;line-height:11.84px;color:#111118;left:14.40px;transform:scaleX(0.9004);transform-origin:left top;">All</div>
<div class="t g" style="top:158.00px;font-size:10.6px;line-height:11.84px;color:#3a3a48;left:39.50px;transform:scaleX(0.9755);transform-origin:left top;">Draft / Rejected (0)</div>
<div class="t g" style="top:158.00px;font-size:10.6px;line-height:11.84px;color:#3a3a48;left:141.00px;transform:scaleX(0.9612);transform-origin:left top;">Awaiting Approval (0)</div>
<div class="t g" style="top:158.00px;font-size:10.6px;line-height:11.84px;color:#3a3a48;left:251.50px;transform:scaleX(0.9608);transform-origin:left top;">Approved (32)</div>
<div class="t g" style="top:158.00px;font-size:10.6px;line-height:11.84px;color:#3a3a48;left:329.70px;transform:scaleX(0.9861);transform-origin:left top;">Void (0)</div>
<div class="t g" style="top:158.00px;font-size:10.6px;line-height:11.84px;color:#3a3a48;left:380.00px;transform:scaleX(0.9458);transform-origin:left top;">Expired (0)</div>
<div class="t g" style="top:130.00px;font-size:9.2px;line-height:10.28px;color:#1a1a28;left:1013.90px;transform:scaleX(0.9304);transform-origin:left top;">Show this grid at startup</div>
<div class="t g" style="top:180.00px;font-size:9.6px;line-height:10.72px;color:#8c8c9c;left:9.80px;transform:scaleX(0.8825);transform-origin:left top;">Drag a column header here to group by that column</div>
<div class="t g" style="top:200.00px;font-size:9.6px;line-height:10.72px;color:#15151e;left:21.30px;transform:scaleX(0.8780);transform-origin:left top;">Doc. No.</div>
<div class="t g" style="top:200.00px;font-size:9.6px;line-height:10.72px;color:#15151e;left:97.30px;transform:scaleX(0.8550);transform-origin:left top;">Self-Billed Type</div>
<div class="t g" style="top:200.00px;font-size:9.6px;line-height:10.72px;color:#15151e;left:183.30px;transform:scaleX(0.8645);transform-origin:left top;">Doc. Date</div>
<div class="t g" style="top:200.00px;font-size:9.6px;line-height:10.72px;color:#15151e;left:267.30px;transform:scaleX(0.8701);transform-origin:left top;">Supplier Invoice No.</div>
<div class="t g" style="top:200.00px;font-size:9.6px;line-height:10.72px;color:#15151e;left:382.30px;transform:scaleX(0.8611);transform-origin:left top;">Supplier Name</div>
<div class="t g" style="top:200.00px;font-size:9.6px;line-height:10.72px;color:#15151e;left:471.30px;transform:scaleX(0.8602);transform-origin:left top;">Delivery Name</div>
<div class="t g" style="top:200.00px;font-size:9.6px;line-height:10.72px;color:#15151e;left:564.30px;transform:scaleX(0.8607);transform-origin:left top;">Currency Code</div>
<div class="t g" style="top:200.00px;font-size:9.6px;line-height:10.72px;color:#15151e;left:653.30px;transform:scaleX(0.8618);transform-origin:left top;">Sub-Total (ex)</div>
<div class="t g" style="top:200.00px;font-size:9.6px;line-height:10.72px;color:#15151e;left:738.30px;transform:scaleX(0.8470);transform-origin:left top;">Tax</div>
<div class="t g" style="top:200.00px;font-size:9.6px;line-height:10.72px;color:#15151e;left:793.30px;transform:scaleX(0.8553);transform-origin:left top;">Total</div>
<div class="t g" style="top:200.00px;font-size:9.6px;line-height:10.72px;color:#15151e;left:856.30px;transform:scaleX(0.8588);transform-origin:left top;">Status</div>
<div class="t g" style="top:200.00px;font-size:9.6px;line-height:10.72px;color:#15151e;left:910.30px;transform:scaleX(0.8681);transform-origin:left top;">e-Invoice Status</div>
<div class="t g" style="top:200.00px;font-size:9.6px;line-height:10.72px;color:#15151e;left:994.30px;transform:scaleX(0.8958);transform-origin:left top;">e-Invoice U...</div>
<div class="t g" style="top:200.00px;font-size:9.6px;line-height:10.72px;color:#15151e;left:1052.30px;transform:scaleX(0.8654);transform-origin:left top;">Cancelled</div>
<div class="t g" style="top:216.00px;font-size:9.6px;line-height:10.72px;color:#8eec8e;left:21.20px;transform:scaleX(0.8560);transform-origin:left top;">SB-000035</div>
<div class="t g" style="top:216.00px;font-size:9.6px;line-height:10.72px;color:#2f9a3a;left:97.20px;transform:scaleX(0.8617);transform-origin:left top;">Self-Billed Invoice</div>
<div class="t g" style="top:216.00px;font-size:9.6px;line-height:10.72px;color:#8eec8e;left:183.20px;transform:scaleX(0.8800);transform-origin:left top;">15/01/2025</div>
<div class="t g" style="top:216.00px;font-size:9.6px;line-height:10.72px;color:#8eec8e;left:382.20px;transform:scaleX(0.8602);transform-origin:left top;">General Public</div>
<div class="t g" style="top:216.00px;font-size:9.6px;line-height:10.72px;color:#8eec8e;left:564.20px;transform:scaleX(0.7900);transform-origin:left top;">MYR</div>
<div class="t g" style="top:216.00px;font-size:9.6px;line-height:10.72px;color:#8eec8e;right:395.80px;transform:scaleX(0.8957);transform-origin:right top;">1,800.00</div>
<div class="t g" style="top:216.00px;font-size:9.6px;line-height:10.72px;color:#8eec8e;right:340.80px;transform:scaleX(0.9114);transform-origin:right top;">0.00</div>
<div class="t g" style="top:216.00px;font-size:9.6px;line-height:10.72px;color:#8eec8e;right:277.80px;transform:scaleX(0.8957);transform-origin:right top;">1,800.00</div>
<div class="t g" style="top:216.00px;font-size:9.6px;line-height:10.72px;color:#8eec8e;left:856.20px;transform:scaleX(0.8660);transform-origin:left top;">Approved</div>
<div class="t g" style="top:216.00px;font-size:9.6px;line-height:10.72px;color:#8eec8e;left:910.20px;transform:scaleX(0.8636);transform-origin:left top;">Pending</div>
<div class="t g" style="top:233.00px;font-size:9.6px;line-height:10.72px;color:#1a1a22;left:21.20px;transform:scaleX(0.8560);transform-origin:left top;">SB-000033</div>
<div class="t g" style="top:233.00px;font-size:9.6px;line-height:10.72px;color:#1a1a22;left:97.20px;transform:scaleX(0.8617);transform-origin:left top;">Self-Billed Invoice</div>
<div class="t g" style="top:233.00px;font-size:9.6px;line-height:10.72px;color:#1a1a22;left:183.20px;transform:scaleX(0.8800);transform-origin:left top;">15/01/2025</div>
<div class="t g" style="top:233.00px;font-size:9.6px;line-height:10.72px;color:#1a1a22;left:382.20px;transform:scaleX(0.8602);transform-origin:left top;">General Public</div>
<div class="t g" style="top:233.00px;font-size:9.6px;line-height:10.72px;color:#1a1a22;left:564.20px;transform:scaleX(0.7900);transform-origin:left top;">MYR</div>
<div class="t g" style="top:233.00px;font-size:9.6px;line-height:10.72px;color:#1a1a22;right:395.80px;transform:scaleX(0.8922);transform-origin:right top;">120,000.00</div>
<div class="t g" style="top:233.00px;font-size:9.6px;line-height:10.72px;color:#1a1a22;right:340.80px;transform:scaleX(0.9114);transform-origin:right top;">0.00</div>
<div class="t g" style="top:233.00px;font-size:9.6px;line-height:10.72px;color:#1a1a22;right:277.80px;transform:scaleX(0.8922);transform-origin:right top;">120,000.00</div>
<div class="t g" style="top:233.00px;font-size:9.6px;line-height:10.72px;color:#1a1a22;left:856.20px;transform:scaleX(0.8660);transform-origin:left top;">Approved</div>
<div class="t g" style="top:233.00px;font-size:9.6px;line-height:10.72px;color:#1a1a22;left:910.20px;transform:scaleX(0.8530);transform-origin:left top;">Valid</div>
<div class="t g" style="top:233.00px;font-size:9.6px;line-height:10.72px;color:#1a1a22;left:994.20px;transform:scaleX(0.8682);transform-origin:left top;">35S1N82RG...</div>
<div class="t g" style="top:249.00px;font-size:9.6px;line-height:10.72px;color:#1a1a22;left:21.20px;transform:scaleX(0.8560);transform-origin:left top;">SB-000032</div>
<div class="t g" style="top:249.00px;font-size:9.6px;line-height:10.72px;color:#1a1a22;left:97.20px;transform:scaleX(0.8617);transform-origin:left top;">Self-Billed Invoice</div>
<div class="t g" style="top:249.00px;font-size:9.6px;line-height:10.72px;color:#1a1a22;left:183.20px;transform:scaleX(0.8800);transform-origin:left top;">10/12/2024</div>
<div class="t g" style="top:249.00px;font-size:9.6px;line-height:10.72px;color:#1a1a22;left:267.20px;transform:scaleX(0.8557);transform-origin:left top;">IV-2345</div>
<div class="t g" style="top:249.00px;font-size:9.6px;line-height:10.72px;color:#1a1a22;left:382.20px;transform:scaleX(0.7993);transform-origin:left top;">OVERSEA1</div>
<div class="t g" style="top:249.00px;font-size:9.6px;line-height:10.72px;color:#1a1a22;left:564.20px;transform:scaleX(0.7900);transform-origin:left top;">CNY</div>
<div class="t g" style="top:249.00px;font-size:9.6px;line-height:10.72px;color:#1a1a22;right:395.80px;transform:scaleX(0.8922);transform-origin:right top;">100,000.00</div>
<div class="t g" style="top:249.00px;font-size:9.6px;line-height:10.72px;color:#1a1a22;right:340.80px;transform:scaleX(0.9114);transform-origin:right top;">0.00</div>
<div class="t g" style="top:249.00px;font-size:9.6px;line-height:10.72px;color:#1a1a22;right:277.80px;transform:scaleX(0.8922);transform-origin:right top;">100,000.00</div>
<div class="t g" style="top:249.00px;font-size:9.6px;line-height:10.72px;color:#1a1a22;left:856.20px;transform:scaleX(0.8660);transform-origin:left top;">Approved</div>
<div class="t g" style="top:249.00px;font-size:9.6px;line-height:10.72px;color:#1a1a22;left:910.20px;transform:scaleX(0.8530);transform-origin:left top;">Valid</div>
<div class="t g" style="top:249.00px;font-size:9.6px;line-height:10.72px;color:#1a1a22;left:994.20px;transform:scaleX(0.8442);transform-origin:left top;">9DYHCDF3J...</div>
<div class="t g" style="top:266.00px;font-size:9.6px;line-height:10.72px;color:#1a1a22;left:21.20px;transform:scaleX(0.8560);transform-origin:left top;">SB-000031</div>
<div class="t g" style="top:266.00px;font-size:9.6px;line-height:10.72px;color:#1a1a22;left:97.20px;transform:scaleX(0.8617);transform-origin:left top;">Self-Billed Invoice</div>
<div class="t g" style="top:266.00px;font-size:9.6px;line-height:10.72px;color:#1a1a22;left:183.20px;transform:scaleX(0.8800);transform-origin:left top;">10/12/2024</div>
<div class="t g" style="top:266.00px;font-size:9.6px;line-height:10.72px;color:#1a1a22;left:267.20px;transform:scaleX(0.8557);transform-origin:left top;">IV-2345</div>
<div class="t g" style="top:266.00px;font-size:9.6px;line-height:10.72px;color:#1a1a22;left:382.20px;transform:scaleX(0.7993);transform-origin:left top;">OVERSEA1</div>
<div class="t g" style="top:266.00px;font-size:9.6px;line-height:10.72px;color:#1a1a22;left:564.20px;transform:scaleX(0.7900);transform-origin:left top;">SGD</div>
<div class="t g" style="top:266.00px;font-size:9.6px;line-height:10.72px;color:#1a1a22;right:395.80px;transform:scaleX(0.8922);transform-origin:right top;">100,000.00</div>
<div class="t g" style="top:266.00px;font-size:9.6px;line-height:10.72px;color:#1a1a22;right:340.80px;transform:scaleX(0.9114);transform-origin:right top;">0.00</div>
<div class="t g" style="top:266.00px;font-size:9.6px;line-height:10.72px;color:#1a1a22;right:277.80px;transform:scaleX(0.8922);transform-origin:right top;">100,000.00</div>
<div class="t g" style="top:266.00px;font-size:9.6px;line-height:10.72px;color:#1a1a22;left:856.20px;transform:scaleX(0.8660);transform-origin:left top;">Approved</div>
<div class="t g" style="top:266.00px;font-size:9.6px;line-height:10.72px;color:#1a1a22;left:910.20px;transform:scaleX(0.8530);transform-origin:left top;">Valid</div>
<div class="t g" style="top:266.00px;font-size:9.6px;line-height:10.72px;color:#1a1a22;left:994.20px;transform:scaleX(0.8551);transform-origin:left top;">CC8HX53W...</div>
<div class="t g" style="top:282.00px;font-size:9.6px;line-height:10.72px;color:#1a1a22;left:21.20px;transform:scaleX(0.8560);transform-origin:left top;">SB-000030</div>
<div class="t g" style="top:282.00px;font-size:9.6px;line-height:10.72px;color:#1a1a22;left:97.20px;transform:scaleX(0.8617);transform-origin:left top;">Self-Billed Invoice</div>
<div class="t g" style="top:282.00px;font-size:9.6px;line-height:10.72px;color:#1a1a22;left:183.20px;transform:scaleX(0.8800);transform-origin:left top;">10/12/2024</div>
<div class="t g" style="top:282.00px;font-size:9.6px;line-height:10.72px;color:#1a1a22;left:267.20px;transform:scaleX(0.8557);transform-origin:left top;">IV-3333</div>
<div class="t g" style="top:282.00px;font-size:9.6px;line-height:10.72px;color:#1a1a22;left:382.20px;transform:scaleX(0.8423);transform-origin:left top;">ABC Advisory Ltd</div>
<div class="t g" style="top:282.00px;font-size:9.6px;line-height:10.72px;color:#1a1a22;left:564.20px;transform:scaleX(0.7900);transform-origin:left top;">SGD</div>
<div class="t g" style="top:282.00px;font-size:9.6px;line-height:10.72px;color:#1a1a22;right:395.80px;transform:scaleX(0.9000);transform-origin:right top;">500.00</div>
<div class="t g" style="top:282.00px;font-size:9.6px;line-height:10.72px;color:#1a1a22;right:340.80px;transform:scaleX(0.9114);transform-origin:right top;">0.00</div>
<div class="t g" style="top:282.00px;font-size:9.6px;line-height:10.72px;color:#1a1a22;right:277.80px;transform:scaleX(0.9000);transform-origin:right top;">500.00</div>
<div class="t g" style="top:282.00px;font-size:9.6px;line-height:10.72px;color:#1a1a22;left:856.20px;transform:scaleX(0.8660);transform-origin:left top;">Approved</div>
<div class="t g" style="top:282.00px;font-size:9.6px;line-height:10.72px;color:#1a1a22;left:910.20px;transform:scaleX(0.8530);transform-origin:left top;">Valid</div>
<div class="t g" style="top:282.00px;font-size:9.6px;line-height:10.72px;color:#1a1a22;left:994.20px;transform:scaleX(0.8593);transform-origin:left top;">B3HT71AD...</div>
<div class="t g" style="top:298.00px;font-size:9.6px;line-height:10.72px;color:#1a1a22;left:21.20px;transform:scaleX(0.8560);transform-origin:left top;">SB-000029</div>
<div class="t g" style="top:298.00px;font-size:9.6px;line-height:10.72px;color:#1a1a22;left:97.20px;transform:scaleX(0.8617);transform-origin:left top;">Self-Billed Invoice</div>
<div class="t g" style="top:298.00px;font-size:9.6px;line-height:10.72px;color:#1a1a22;left:183.20px;transform:scaleX(0.8800);transform-origin:left top;">10/12/2024</div>
<div class="t g" style="top:298.00px;font-size:9.6px;line-height:10.72px;color:#1a1a22;left:382.20px;transform:scaleX(0.7900);transform-origin:left top;">CASS</div>
<div class="t g" style="top:298.00px;font-size:9.6px;line-height:10.72px;color:#1a1a22;left:564.20px;transform:scaleX(0.7900);transform-origin:left top;">MYR</div>
<div class="t g" style="top:298.00px;font-size:9.6px;line-height:10.72px;color:#1a1a22;right:395.80px;transform:scaleX(0.8922);transform-origin:right top;">120,000.00</div>
<div class="t g" style="top:298.00px;font-size:9.6px;line-height:10.72px;color:#1a1a22;right:340.80px;transform:scaleX(0.9114);transform-origin:right top;">0.00</div>
<div class="t g" style="top:298.00px;font-size:9.6px;line-height:10.72px;color:#1a1a22;right:277.80px;transform:scaleX(0.8922);transform-origin:right top;">120,000.00</div>
<div class="t g" style="top:298.00px;font-size:9.6px;line-height:10.72px;color:#1a1a22;left:856.20px;transform:scaleX(0.8660);transform-origin:left top;">Approved</div>
<div class="t g" style="top:298.00px;font-size:9.6px;line-height:10.72px;color:#1a1a22;left:910.20px;transform:scaleX(0.8530);transform-origin:left top;">Valid</div>
<div class="t g" style="top:298.00px;font-size:9.6px;line-height:10.72px;color:#1a1a22;left:994.20px;transform:scaleX(0.8456);transform-origin:left top;">B1WQQPX9...</div>
<div class="t g" style="top:315.00px;font-size:9.6px;line-height:10.72px;color:#1a1a22;left:21.20px;transform:scaleX(0.8560);transform-origin:left top;">SB-000028</div>
<div class="t g" style="top:315.00px;font-size:9.6px;line-height:10.72px;color:#1a1a22;left:97.20px;transform:scaleX(0.8617);transform-origin:left top;">Self-Billed Invoice</div>
<div class="t g" style="top:315.00px;font-size:9.6px;line-height:10.72px;color:#1a1a22;left:183.20px;transform:scaleX(0.8800);transform-origin:left top;">10/12/2024</div>
<div class="t g" style="top:315.00px;font-size:9.6px;line-height:10.72px;color:#1a1a22;left:382.20px;transform:scaleX(0.8230);transform-origin:left top;">C Y MULTITRADE S...</div>
<div class="t g" style="top:315.00px;font-size:9.6px;line-height:10.72px;color:#1a1a22;left:564.20px;transform:scaleX(0.7900);transform-origin:left top;">MYR</div>
<div class="t g" style="top:315.00px;font-size:9.6px;line-height:10.72px;color:#1a1a22;right:395.80px;transform:scaleX(0.9000);transform-origin:right top;">150.00</div>
<div class="t g" style="top:315.00px;font-size:9.6px;line-height:10.72px;color:#1a1a22;right:340.80px;transform:scaleX(0.9114);transform-origin:right top;">0.00</div>
<div class="t g" style="top:315.00px;font-size:9.6px;line-height:10.72px;color:#1a1a22;right:277.80px;transform:scaleX(0.9000);transform-origin:right top;">150.00</div>
<div class="t g" style="top:315.00px;font-size:9.6px;line-height:10.72px;color:#1a1a22;left:856.20px;transform:scaleX(0.8660);transform-origin:left top;">Approved</div>
<div class="t g" style="top:315.00px;font-size:9.6px;line-height:10.72px;color:#1a1a22;left:910.20px;transform:scaleX(0.8530);transform-origin:left top;">Valid</div>
<div class="t g" style="top:315.00px;font-size:9.6px;line-height:10.72px;color:#1a1a22;left:994.20px;transform:scaleX(0.8545);transform-origin:left top;">0MW3YKR8...</div>
<div class="t g" style="top:331.00px;font-size:9.6px;line-height:10.72px;color:#1a1a22;left:21.20px;transform:scaleX(0.8560);transform-origin:left top;">SB-000027</div>
<div class="t g" style="top:331.00px;font-size:9.6px;line-height:10.72px;color:#1a1a22;left:97.20px;transform:scaleX(0.8617);transform-origin:left top;">Self-Billed Invoice</div>
<div class="t g" style="top:331.00px;font-size:9.6px;line-height:10.72px;color:#1a1a22;left:183.20px;transform:scaleX(0.8800);transform-origin:left top;">09/12/2024</div>
<div class="t g" style="top:331.00px;font-size:9.6px;line-height:10.72px;color:#1a1a22;left:382.20px;transform:scaleX(0.7900);transform-origin:left top;">WILLY</div>
<div class="t g" style="top:331.00px;font-size:9.6px;line-height:10.72px;color:#1a1a22;left:564.20px;transform:scaleX(0.7900);transform-origin:left top;">MYR</div>
<div class="t g" style="top:331.00px;font-size:9.6px;line-height:10.72px;color:#1a1a22;right:395.80px;transform:scaleX(0.9000);transform-origin:right top;">500.00</div>
<div class="t g" style="top:331.00px;font-size:9.6px;line-height:10.72px;color:#1a1a22;right:340.80px;transform:scaleX(0.9114);transform-origin:right top;">0.00</div>
<div class="t g" style="top:331.00px;font-size:9.6px;line-height:10.72px;color:#1a1a22;right:277.80px;transform:scaleX(0.9000);transform-origin:right top;">500.00</div>
<div class="t g" style="top:331.00px;font-size:9.6px;line-height:10.72px;color:#1a1a22;left:856.20px;transform:scaleX(0.8660);transform-origin:left top;">Approved</div>
<div class="t g" style="top:331.00px;font-size:9.6px;line-height:10.72px;color:#1a1a22;left:910.20px;transform:scaleX(0.8530);transform-origin:left top;">Valid</div>
<div class="t g" style="top:331.00px;font-size:9.6px;line-height:10.72px;color:#1a1a22;left:994.20px;transform:scaleX(0.8466);transform-origin:left top;">9MTN5TWX...</div>
<div class="t g" style="top:348.00px;font-size:9.6px;line-height:10.72px;color:#1a1a22;left:21.20px;transform:scaleX(0.8560);transform-origin:left top;">SB-000026</div>
<div class="t g" style="top:348.00px;font-size:9.6px;line-height:10.72px;color:#1a1a22;left:97.20px;transform:scaleX(0.8617);transform-origin:left top;">Self-Billed Invoice</div>
<div class="t g" style="top:348.00px;font-size:9.6px;line-height:10.72px;color:#1a1a22;left:183.20px;transform:scaleX(0.8800);transform-origin:left top;">09/12/2024</div>
<div class="t g" style="top:348.00px;font-size:9.6px;line-height:10.72px;color:#1a1a22;left:382.20px;transform:scaleX(0.7900);transform-origin:left top;">TINA</div>
<div class="t g" style="top:348.00px;font-size:9.6px;line-height:10.72px;color:#1a1a22;left:564.20px;transform:scaleX(0.7900);transform-origin:left top;">MYR</div>
<div class="t g" style="top:348.00px;font-size:9.6px;line-height:10.72px;color:#1a1a22;right:395.80px;transform:scaleX(0.9000);transform-origin:right top;">500.00</div>
<div class="t g" style="top:348.00px;font-size:9.6px;line-height:10.72px;color:#1a1a22;right:340.80px;transform:scaleX(0.9114);transform-origin:right top;">0.00</div>
<div class="t g" style="top:348.00px;font-size:9.6px;line-height:10.72px;color:#1a1a22;right:277.80px;transform:scaleX(0.9000);transform-origin:right top;">500.00</div>
<div class="t g" style="top:348.00px;font-size:9.6px;line-height:10.72px;color:#1a1a22;left:856.20px;transform:scaleX(0.8660);transform-origin:left top;">Approved</div>
<div class="t g" style="top:348.00px;font-size:9.6px;line-height:10.72px;color:#1a1a22;left:910.20px;transform:scaleX(0.8530);transform-origin:left top;">Valid</div>
<div class="t g" style="top:348.00px;font-size:9.6px;line-height:10.72px;color:#1a1a22;left:994.20px;transform:scaleX(0.8366);transform-origin:left top;">DBKZ1TJGK...</div>
<div class="t g" style="top:364.00px;font-size:9.6px;line-height:10.72px;color:#1a1a22;left:21.20px;transform:scaleX(0.8560);transform-origin:left top;">SB-000025</div>
<div class="t g" style="top:364.00px;font-size:9.6px;line-height:10.72px;color:#1a1a22;left:97.20px;transform:scaleX(0.8617);transform-origin:left top;">Self-Billed Invoice</div>
<div class="t g" style="top:364.00px;font-size:9.6px;line-height:10.72px;color:#1a1a22;left:183.20px;transform:scaleX(0.8800);transform-origin:left top;">09/12/2024</div>
<div class="t g" style="top:364.00px;font-size:9.6px;line-height:10.72px;color:#1a1a22;left:382.20px;transform:scaleX(0.7900);transform-origin:left top;">CASS</div>
<div class="t g" style="top:364.00px;font-size:9.6px;line-height:10.72px;color:#1a1a22;left:564.20px;transform:scaleX(0.7900);transform-origin:left top;">MYR</div>
<div class="t g" style="top:364.00px;font-size:9.6px;line-height:10.72px;color:#1a1a22;right:395.80px;transform:scaleX(0.9000);transform-origin:right top;">500.00</div>
<div class="t g" style="top:364.00px;font-size:9.6px;line-height:10.72px;color:#1a1a22;right:340.80px;transform:scaleX(0.9114);transform-origin:right top;">0.00</div>
<div class="t g" style="top:364.00px;font-size:9.6px;line-height:10.72px;color:#1a1a22;right:277.80px;transform:scaleX(0.9000);transform-origin:right top;">500.00</div>
<div class="t g" style="top:364.00px;font-size:9.6px;line-height:10.72px;color:#1a1a22;left:856.20px;transform:scaleX(0.8660);transform-origin:left top;">Approved</div>
<div class="t g" style="top:364.00px;font-size:9.6px;line-height:10.72px;color:#1a1a22;left:910.20px;transform:scaleX(0.8530);transform-origin:left top;">Valid</div>
<div class="t g" style="top:364.00px;font-size:9.6px;line-height:10.72px;color:#1a1a22;left:994.20px;transform:scaleX(0.8518);transform-origin:left top;">E27VACSD6...</div>
<div class="t g" style="top:380.00px;font-size:9.6px;line-height:10.72px;color:#1a1a22;left:21.20px;transform:scaleX(0.8560);transform-origin:left top;">SB-000023</div>
<div class="t g" style="top:380.00px;font-size:9.6px;line-height:10.72px;color:#1a1a22;left:97.20px;transform:scaleX(0.8617);transform-origin:left top;">Self-Billed Invoice</div>
<div class="t g" style="top:380.00px;font-size:9.6px;line-height:10.72px;color:#1a1a22;left:183.20px;transform:scaleX(0.8800);transform-origin:left top;">09/12/2024</div>
<div class="t g" style="top:380.00px;font-size:9.6px;line-height:10.72px;color:#1a1a22;left:382.20px;transform:scaleX(0.7900);transform-origin:left top;">TINA</div>
<div class="t g" style="top:380.00px;font-size:9.6px;line-height:10.72px;color:#1a1a22;left:564.20px;transform:scaleX(0.7900);transform-origin:left top;">MYR</div>
<div class="t g" style="top:380.00px;font-size:9.6px;line-height:10.72px;color:#1a1a22;right:395.80px;transform:scaleX(0.8957);transform-origin:right top;">1,800.00</div>
<div class="t g" style="top:380.00px;font-size:9.6px;line-height:10.72px;color:#1a1a22;right:340.80px;transform:scaleX(0.9114);transform-origin:right top;">0.00</div>
<div class="t g" style="top:380.00px;font-size:9.6px;line-height:10.72px;color:#1a1a22;right:277.80px;transform:scaleX(0.8957);transform-origin:right top;">1,800.00</div>
<div class="t g" style="top:380.00px;font-size:9.6px;line-height:10.72px;color:#1a1a22;left:856.20px;transform:scaleX(0.8660);transform-origin:left top;">Approved</div>
<div class="t g" style="top:380.00px;font-size:9.6px;line-height:10.72px;color:#1a1a22;left:910.20px;transform:scaleX(0.8530);transform-origin:left top;">Valid</div>
<div class="t g" style="top:380.00px;font-size:9.6px;line-height:10.72px;color:#1a1a22;left:994.20px;transform:scaleX(0.8387);transform-origin:left top;">SYWSQJR2...</div>
<div class="t g" style="top:397.00px;font-size:9.6px;line-height:10.72px;color:#1a1a22;left:21.20px;transform:scaleX(0.8560);transform-origin:left top;">SB-000022</div>
<div class="t g" style="top:397.00px;font-size:9.6px;line-height:10.72px;color:#1a1a22;left:97.20px;transform:scaleX(0.8617);transform-origin:left top;">Self-Billed Invoice</div>
<div class="t g" style="top:397.00px;font-size:9.6px;line-height:10.72px;color:#1a1a22;left:183.20px;transform:scaleX(0.8800);transform-origin:left top;">09/12/2024</div>
<div class="t g" style="top:397.00px;font-size:9.6px;line-height:10.72px;color:#1a1a22;left:382.20px;transform:scaleX(0.7900);transform-origin:left top;">TINA</div>
<div class="t g" style="top:397.00px;font-size:9.6px;line-height:10.72px;color:#1a1a22;left:564.20px;transform:scaleX(0.7900);transform-origin:left top;">MYR</div>
<div class="t g" style="top:397.00px;font-size:9.6px;line-height:10.72px;color:#1a1a22;right:395.80px;transform:scaleX(0.9044);transform-origin:right top;">50.00</div>
<div class="t g" style="top:397.00px;font-size:9.6px;line-height:10.72px;color:#1a1a22;right:340.80px;transform:scaleX(0.9114);transform-origin:right top;">0.00</div>
<div class="t g" style="top:397.00px;font-size:9.6px;line-height:10.72px;color:#1a1a22;right:277.80px;transform:scaleX(0.9044);transform-origin:right top;">50.00</div>
<div class="t g" style="top:397.00px;font-size:9.6px;line-height:10.72px;color:#1a1a22;left:856.20px;transform:scaleX(0.8660);transform-origin:left top;">Approved</div>
<div class="t g" style="top:397.00px;font-size:9.6px;line-height:10.72px;color:#1a1a22;left:910.20px;transform:scaleX(0.8530);transform-origin:left top;">Valid</div>
<div class="t g" style="top:397.00px;font-size:9.6px;line-height:10.72px;color:#1a1a22;left:994.20px;transform:scaleX(0.8637);transform-origin:left top;">650XW0WZ...</div>
<div class="t g" style="top:413.00px;font-size:9.6px;line-height:10.72px;color:#1a1a22;left:21.20px;transform:scaleX(0.8560);transform-origin:left top;">SB-000020</div>
<div class="t g" style="top:413.00px;font-size:9.6px;line-height:10.72px;color:#1a1a22;left:97.20px;transform:scaleX(0.8617);transform-origin:left top;">Self-Billed Invoice</div>
<div class="t g" style="top:413.00px;font-size:9.6px;line-height:10.72px;color:#1a1a22;left:183.20px;transform:scaleX(0.8800);transform-origin:left top;">21/11/2024</div>
<div class="t g" style="top:413.00px;font-size:9.6px;line-height:10.72px;color:#1a1a22;left:382.20px;transform:scaleX(0.7951);transform-origin:left top;">YONG SIEW YOONG</div>
<div class="t g" style="top:413.00px;font-size:9.6px;line-height:10.72px;color:#1a1a22;left:564.20px;transform:scaleX(0.7900);transform-origin:left top;">MYR</div>
<div class="t g" style="top:413.00px;font-size:9.6px;line-height:10.72px;color:#1a1a22;right:395.80px;transform:scaleX(0.8957);transform-origin:right top;">2,000.00</div>
<div class="t g" style="top:413.00px;font-size:9.6px;line-height:10.72px;color:#1a1a22;right:340.80px;transform:scaleX(0.9114);transform-origin:right top;">0.00</div>
<div class="t g" style="top:413.00px;font-size:9.6px;line-height:10.72px;color:#1a1a22;right:277.80px;transform:scaleX(0.8957);transform-origin:right top;">2,000.00</div>
<div class="t g" style="top:413.00px;font-size:9.6px;line-height:10.72px;color:#1a1a22;left:856.20px;transform:scaleX(0.8660);transform-origin:left top;">Approved</div>
<div class="t g" style="top:413.00px;font-size:9.6px;line-height:10.72px;color:#1a1a22;left:910.20px;transform:scaleX(0.8530);transform-origin:left top;">Valid</div>
<div class="t g" style="top:413.00px;font-size:9.6px;line-height:10.72px;color:#1a1a22;left:994.20px;transform:scaleX(0.8703);transform-origin:left top;">5K7H04Y0B...</div>
<div class="t g" style="top:430.00px;font-size:9.6px;line-height:10.72px;color:#1a1a22;left:21.20px;transform:scaleX(0.8560);transform-origin:left top;">SB-000019</div>
<div class="t g" style="top:430.00px;font-size:9.6px;line-height:10.72px;color:#1a1a22;left:97.20px;transform:scaleX(0.8617);transform-origin:left top;">Self-Billed Invoice</div>
<div class="t g" style="top:430.00px;font-size:9.6px;line-height:10.72px;color:#1a1a22;left:183.20px;transform:scaleX(0.8800);transform-origin:left top;">21/11/2024</div>
<div class="t g" style="top:430.00px;font-size:9.6px;line-height:10.72px;color:#1a1a22;left:382.20px;transform:scaleX(0.7951);transform-origin:left top;">YONG SIEW YOONG</div>
<div class="t g" style="top:430.00px;font-size:9.6px;line-height:10.72px;color:#1a1a22;left:564.20px;transform:scaleX(0.7900);transform-origin:left top;">MYR</div>
<div class="t g" style="top:430.00px;font-size:9.6px;line-height:10.72px;color:#1a1a22;right:395.80px;transform:scaleX(0.8957);transform-origin:right top;">2,200.00</div>
<div class="t g" style="top:430.00px;font-size:9.6px;line-height:10.72px;color:#1a1a22;right:340.80px;transform:scaleX(0.9114);transform-origin:right top;">0.00</div>
<div class="t g" style="top:430.00px;font-size:9.6px;line-height:10.72px;color:#1a1a22;right:277.80px;transform:scaleX(0.8957);transform-origin:right top;">2,200.00</div>
<div class="t g" style="top:430.00px;font-size:9.6px;line-height:10.72px;color:#1a1a22;left:856.20px;transform:scaleX(0.8660);transform-origin:left top;">Approved</div>
<div class="t g" style="top:430.00px;font-size:9.6px;line-height:10.72px;color:#1a1a22;left:910.20px;transform:scaleX(0.8530);transform-origin:left top;">Valid</div>
<div class="t g" style="top:430.00px;font-size:9.6px;line-height:10.72px;color:#1a1a22;left:994.20px;transform:scaleX(0.8301);transform-origin:left top;">NXQYDRHT...</div>
<div class="t g" style="top:446.00px;font-size:9.6px;line-height:10.72px;color:#1a1a22;left:21.20px;transform:scaleX(0.8560);transform-origin:left top;">SB-000018</div>
<div class="t g" style="top:446.00px;font-size:9.6px;line-height:10.72px;color:#1a1a22;left:97.20px;transform:scaleX(0.8617);transform-origin:left top;">Self-Billed Invoice</div>
<div class="t g" style="top:446.00px;font-size:9.6px;line-height:10.72px;color:#1a1a22;left:183.20px;transform:scaleX(0.8800);transform-origin:left top;">21/11/2024</div>
<div class="t g" style="top:446.00px;font-size:9.6px;line-height:10.72px;color:#1a1a22;left:267.20px;transform:scaleX(0.8800);transform-origin:left top;">471</div>
<div class="t g" style="top:446.00px;font-size:9.6px;line-height:10.72px;color:#1a1a22;left:382.20px;transform:scaleX(0.7993);transform-origin:left top;">OVERSEA1</div>
<div class="t g" style="top:446.00px;font-size:9.6px;line-height:10.72px;color:#1a1a22;left:471.20px;transform:scaleX(0.8199);transform-origin:left top;">C Y SOFTECH SOLUT...</div>
<div class="t g" style="top:446.00px;font-size:9.6px;line-height:10.72px;color:#1a1a22;left:564.20px;transform:scaleX(0.7900);transform-origin:left top;">USD</div>
<div class="t g" style="top:446.00px;font-size:9.6px;line-height:10.72px;color:#1a1a22;right:395.80px;transform:scaleX(0.8922);transform-origin:right top;">110,000.00</div>
<div class="t g" style="top:446.00px;font-size:9.6px;line-height:10.72px;color:#1a1a22;right:340.80px;transform:scaleX(0.9114);transform-origin:right top;">0.00</div>
<div class="t g" style="top:446.00px;font-size:9.6px;line-height:10.72px;color:#1a1a22;right:277.80px;transform:scaleX(0.8922);transform-origin:right top;">110,000.00</div>
<div class="t g" style="top:446.00px;font-size:9.6px;line-height:10.72px;color:#1a1a22;left:856.20px;transform:scaleX(0.8660);transform-origin:left top;">Approved</div>
<div class="t g" style="top:446.00px;font-size:9.6px;line-height:10.72px;color:#1a1a22;left:910.20px;transform:scaleX(0.8530);transform-origin:left top;">Valid</div>
<div class="t g" style="top:446.00px;font-size:9.6px;line-height:10.72px;color:#1a1a22;left:994.20px;transform:scaleX(0.8374);transform-origin:left top;">CSWZCVG1...</div>
<div class="t g" style="top:462.00px;font-size:9.6px;line-height:10.72px;color:#1a1a22;left:21.20px;transform:scaleX(0.8560);transform-origin:left top;">SB-000017</div>
<div class="t g" style="top:462.00px;font-size:9.6px;line-height:10.72px;color:#1a1a22;left:97.20px;transform:scaleX(0.8617);transform-origin:left top;">Self-Billed Invoice</div>
<div class="t g" style="top:462.00px;font-size:9.6px;line-height:10.72px;color:#1a1a22;left:183.20px;transform:scaleX(0.8800);transform-origin:left top;">21/11/2024</div>
<div class="t g" style="top:462.00px;font-size:9.6px;line-height:10.72px;color:#1a1a22;left:267.20px;transform:scaleX(0.8800);transform-origin:left top;">2530</div>
<div class="t g" style="top:462.00px;font-size:9.6px;line-height:10.72px;color:#1a1a22;left:382.20px;transform:scaleX(0.7900);transform-origin:left top;">OVERSEA</div>
<div class="t g" style="top:462.00px;font-size:9.6px;line-height:10.72px;color:#1a1a22;left:564.20px;transform:scaleX(0.7900);transform-origin:left top;">SGD</div>
<div class="t g" style="top:462.00px;font-size:9.6px;line-height:10.72px;color:#1a1a22;right:395.80px;transform:scaleX(0.8937);transform-origin:right top;">19,488.00</div>
<div class="t g" style="top:462.00px;font-size:9.6px;line-height:10.72px;color:#1a1a22;right:340.80px;transform:scaleX(0.9114);transform-origin:right top;">0.00</div>
<div class="t g" style="top:462.00px;font-size:9.6px;line-height:10.72px;color:#1a1a22;right:277.80px;transform:scaleX(0.8937);transform-origin:right top;">19,488.00</div>
<div class="t g" style="top:462.00px;font-size:9.6px;line-height:10.72px;color:#1a1a22;left:856.20px;transform:scaleX(0.8660);transform-origin:left top;">Approved</div>
<div class="t g" style="top:462.00px;font-size:9.6px;line-height:10.72px;color:#e8202a;left:910.20px;transform:scaleX(0.8713);transform-origin:left top;">Invalid</div>
<div class="t g" style="top:462.00px;font-size:9.6px;line-height:10.72px;color:#1a1a22;left:994.20px;transform:scaleX(0.8379);transform-origin:left top;">8VWTWJFQ...</div>
<div class="t g" style="top:479.00px;font-size:9.6px;line-height:10.72px;color:#1a1a22;left:21.20px;transform:scaleX(0.8560);transform-origin:left top;">SB-000016</div>
<div class="t g" style="top:479.00px;font-size:9.6px;line-height:10.72px;color:#1a1a22;left:97.20px;transform:scaleX(0.8617);transform-origin:left top;">Self-Billed Invoice</div>
<div class="t g" style="top:479.00px;font-size:9.6px;line-height:10.72px;color:#1a1a22;left:183.20px;transform:scaleX(0.8800);transform-origin:left top;">21/11/2024</div>
<div class="t g" style="top:479.00px;font-size:9.6px;line-height:10.72px;color:#1a1a22;left:267.20px;transform:scaleX(0.8800);transform-origin:left top;">456</div>
<div class="t g" style="top:479.00px;font-size:9.6px;line-height:10.72px;color:#1a1a22;left:382.20px;transform:scaleX(0.7993);transform-origin:left top;">OVERSEA1</div>
<div class="t g" style="top:479.00px;font-size:9.6px;line-height:10.72px;color:#1a1a22;left:564.20px;transform:scaleX(0.7900);transform-origin:left top;">USD</div>
<div class="t g" style="top:479.00px;font-size:9.6px;line-height:10.72px;color:#1a1a22;right:395.80px;transform:scaleX(0.8922);transform-origin:right top;">110,000.00</div>
<div class="t g" style="top:479.00px;font-size:9.6px;line-height:10.72px;color:#1a1a22;right:340.80px;transform:scaleX(0.9114);transform-origin:right top;">0.00</div>
<div class="t g" style="top:479.00px;font-size:9.6px;line-height:10.72px;color:#1a1a22;right:277.80px;transform:scaleX(0.8922);transform-origin:right top;">110,000.00</div>
<div class="t g" style="top:479.00px;font-size:9.6px;line-height:10.72px;color:#1a1a22;left:856.20px;transform:scaleX(0.8660);transform-origin:left top;">Approved</div>
<div class="t g" style="top:479.00px;font-size:9.6px;line-height:10.72px;color:#1a1a22;left:910.20px;transform:scaleX(0.8530);transform-origin:left top;">Valid</div>
<div class="t g" style="top:479.00px;font-size:9.6px;line-height:10.72px;color:#1a1a22;left:994.20px;transform:scaleX(0.8650);transform-origin:left top;">4QWP263E...</div>
<div class="t g" style="top:495.00px;font-size:9.6px;line-height:10.72px;color:#1a1a22;left:21.20px;transform:scaleX(0.8560);transform-origin:left top;">SB-000015</div>
<div class="t g" style="top:495.00px;font-size:9.6px;line-height:10.72px;color:#1a1a22;left:97.20px;transform:scaleX(0.8617);transform-origin:left top;">Self-Billed Invoice</div>
<div class="t g" style="top:495.00px;font-size:9.6px;line-height:10.72px;color:#1a1a22;left:183.20px;transform:scaleX(0.8800);transform-origin:left top;">19/11/2024</div>
<div class="t g" style="top:495.00px;font-size:9.6px;line-height:10.72px;color:#1a1a22;left:382.20px;transform:scaleX(0.7951);transform-origin:left top;">YONG SIEW YOONG</div>
<div class="t g" style="top:495.00px;font-size:9.6px;line-height:10.72px;color:#1a1a22;left:564.20px;transform:scaleX(0.7900);transform-origin:left top;">MYR</div>
<div class="t g" style="top:495.00px;font-size:9.6px;line-height:10.72px;color:#1a1a22;right:395.80px;transform:scaleX(0.8957);transform-origin:right top;">1,000.00</div>
<div class="t g" style="top:495.00px;font-size:9.6px;line-height:10.72px;color:#1a1a22;right:340.80px;transform:scaleX(0.9114);transform-origin:right top;">0.00</div>
<div class="t g" style="top:495.00px;font-size:9.6px;line-height:10.72px;color:#1a1a22;right:277.80px;transform:scaleX(0.8957);transform-origin:right top;">1,000.00</div>
<div class="t g" style="top:495.00px;font-size:9.6px;line-height:10.72px;color:#1a1a22;left:856.20px;transform:scaleX(0.8660);transform-origin:left top;">Approved</div>
<div class="t g" style="top:495.00px;font-size:9.6px;line-height:10.72px;color:#1a1a22;left:910.20px;transform:scaleX(0.8530);transform-origin:left top;">Valid</div>
<div class="t g" style="top:495.00px;font-size:9.6px;line-height:10.72px;color:#1a1a22;left:994.20px;transform:scaleX(0.8391);transform-origin:left top;">GVYD0RTC...</div>
<div class="t g" style="top:512.00px;font-size:9.6px;line-height:10.72px;color:#1a1a22;left:21.20px;transform:scaleX(0.8560);transform-origin:left top;">SB-000014</div>
<div class="t g" style="top:512.00px;font-size:9.6px;line-height:10.72px;color:#1a1a22;left:97.20px;transform:scaleX(0.8617);transform-origin:left top;">Self-Billed Invoice</div>
<div class="t g" style="top:512.00px;font-size:9.6px;line-height:10.72px;color:#1a1a22;left:183.20px;transform:scaleX(0.8800);transform-origin:left top;">19/11/2024</div>
<div class="t g" style="top:512.00px;font-size:9.6px;line-height:10.72px;color:#1a1a22;left:267.20px;transform:scaleX(0.8500);transform-origin:left top;">INV222530</div>
<div class="t g" style="top:512.00px;font-size:9.6px;line-height:10.72px;color:#1a1a22;left:382.20px;transform:scaleX(0.7900);transform-origin:left top;">OVERSEA</div>
<div class="t g" style="top:512.00px;font-size:9.6px;line-height:10.72px;color:#1a1a22;left:564.20px;transform:scaleX(0.7900);transform-origin:left top;">USD</div>
<div class="t g" style="top:512.00px;font-size:9.6px;line-height:10.72px;color:#1a1a22;right:395.80px;transform:scaleX(0.8957);transform-origin:right top;">2,000.00</div>
<div class="t g" style="top:512.00px;font-size:9.6px;line-height:10.72px;color:#1a1a22;right:340.80px;transform:scaleX(0.9114);transform-origin:right top;">0.00</div>
<div class="t g" style="top:512.00px;font-size:9.6px;line-height:10.72px;color:#1a1a22;right:277.80px;transform:scaleX(0.8957);transform-origin:right top;">2,000.00</div>
<div class="t g" style="top:512.00px;font-size:9.6px;line-height:10.72px;color:#1a1a22;left:856.20px;transform:scaleX(0.8660);transform-origin:left top;">Approved</div>
<div class="t g" style="top:512.00px;font-size:9.6px;line-height:10.72px;color:#e8202a;left:910.20px;transform:scaleX(0.8713);transform-origin:left top;">Invalid</div>
<div class="t g" style="top:512.00px;font-size:9.6px;line-height:10.72px;color:#1a1a22;left:994.20px;transform:scaleX(0.8574);transform-origin:left top;">5VDC47RH...</div>
<div class="t g" style="top:528.00px;font-size:9.6px;line-height:10.72px;color:#1a1a22;left:21.20px;transform:scaleX(0.8560);transform-origin:left top;">SB-000013</div>
<div class="t g" style="top:528.00px;font-size:9.6px;line-height:10.72px;color:#1a1a22;left:97.20px;transform:scaleX(0.8617);transform-origin:left top;">Self-Billed Invoice</div>
<div class="t g" style="top:528.00px;font-size:9.6px;line-height:10.72px;color:#1a1a22;left:183.20px;transform:scaleX(0.8800);transform-origin:left top;">19/11/2024</div>
<div class="t g" style="top:528.00px;font-size:9.6px;line-height:10.72px;color:#1a1a22;left:382.20px;transform:scaleX(0.7951);transform-origin:left top;">YONG SIEW YOONG</div>
<div class="t g" style="top:528.00px;font-size:9.6px;line-height:10.72px;color:#1a1a22;left:564.20px;transform:scaleX(0.7900);transform-origin:left top;">MYR</div>
<div class="t g" style="top:528.00px;font-size:9.6px;line-height:10.72px;color:#1a1a22;right:395.80px;transform:scaleX(0.8957);transform-origin:right top;">2,000.00</div>
<div class="t g" style="top:528.00px;font-size:9.6px;line-height:10.72px;color:#1a1a22;right:340.80px;transform:scaleX(0.9114);transform-origin:right top;">0.00</div>
<div class="t g" style="top:528.00px;font-size:9.6px;line-height:10.72px;color:#1a1a22;right:277.80px;transform:scaleX(0.8957);transform-origin:right top;">2,000.00</div>
<div class="t g" style="top:528.00px;font-size:9.6px;line-height:10.72px;color:#1a1a22;left:856.20px;transform:scaleX(0.8660);transform-origin:left top;">Approved</div>
<div class="t g" style="top:528.00px;font-size:9.6px;line-height:10.72px;color:#1a1a22;left:910.20px;transform:scaleX(0.8530);transform-origin:left top;">Valid</div>
<div class="t g" style="top:528.00px;font-size:9.6px;line-height:10.72px;color:#1a1a22;left:994.20px;transform:scaleX(0.8562);transform-origin:left top;">C2B3MT8M...</div>
<div class="t g" style="top:544.00px;font-size:9.6px;line-height:10.72px;color:#1a1a22;left:21.20px;transform:scaleX(0.8560);transform-origin:left top;">SB-000012</div>
<div class="t g" style="top:544.00px;font-size:9.6px;line-height:10.72px;color:#1a1a22;left:97.20px;transform:scaleX(0.8617);transform-origin:left top;">Self-Billed Invoice</div>
<div class="t g" style="top:544.00px;font-size:9.6px;line-height:10.72px;color:#1a1a22;left:183.20px;transform:scaleX(0.8800);transform-origin:left top;">11/10/2024</div>
<div class="t g" style="top:544.00px;font-size:9.6px;line-height:10.72px;color:#1a1a22;left:382.20px;transform:scaleX(0.7951);transform-origin:left top;">YONG SIEW YOONG</div>
<div class="t g" style="top:544.00px;font-size:9.6px;line-height:10.72px;color:#1a1a22;left:564.20px;transform:scaleX(0.7900);transform-origin:left top;">MYR</div>
<div class="t g" style="top:544.00px;font-size:9.6px;line-height:10.72px;color:#1a1a22;right:395.80px;transform:scaleX(0.9000);transform-origin:right top;">100.00</div>
<div class="t g" style="top:544.00px;font-size:9.6px;line-height:10.72px;color:#1a1a22;right:340.80px;transform:scaleX(0.9114);transform-origin:right top;">0.00</div>
<div class="t g" style="top:544.00px;font-size:9.6px;line-height:10.72px;color:#1a1a22;right:277.80px;transform:scaleX(0.9000);transform-origin:right top;">100.00</div>
<div class="t g" style="top:544.00px;font-size:9.6px;line-height:10.72px;color:#1a1a22;left:856.20px;transform:scaleX(0.8660);transform-origin:left top;">Approved</div>
<div class="t g" style="top:544.00px;font-size:9.6px;line-height:10.72px;color:#1a1a22;left:910.20px;transform:scaleX(0.8530);transform-origin:left top;">Valid</div>
<div class="t g" style="top:544.00px;font-size:9.6px;line-height:10.72px;color:#1a1a22;left:994.20px;transform:scaleX(0.8568);transform-origin:left top;">HF37MG0V...</div>
<div class="t g" style="top:561.00px;font-size:9.6px;line-height:10.72px;color:#1a1a22;left:21.20px;transform:scaleX(0.8560);transform-origin:left top;">SB-000008</div>
<div class="t g" style="top:561.00px;font-size:9.6px;line-height:10.72px;color:#1a1a22;left:97.20px;transform:scaleX(0.8617);transform-origin:left top;">Self-Billed Invoice</div>
<div class="t g" style="top:561.00px;font-size:9.6px;line-height:10.72px;color:#1a1a22;left:183.20px;transform:scaleX(0.8800);transform-origin:left top;">10/10/2024</div>
<div class="t g" style="top:561.00px;font-size:9.6px;line-height:10.72px;color:#1a1a22;left:267.20px;transform:scaleX(0.8800);transform-origin:left top;">2225</div>
<div class="t g" style="top:561.00px;font-size:9.6px;line-height:10.72px;color:#1a1a22;left:382.20px;transform:scaleX(0.7900);transform-origin:left top;">OVERSEA</div>
<div class="t g" style="top:561.00px;font-size:9.6px;line-height:10.72px;color:#1a1a22;left:564.20px;transform:scaleX(0.7900);transform-origin:left top;">USD</div>
<div class="t g" style="top:561.00px;font-size:9.6px;line-height:10.72px;color:#1a1a22;right:395.80px;transform:scaleX(0.8937);transform-origin:right top;">25,000.00</div>
<div class="t g" style="top:561.00px;font-size:9.6px;line-height:10.72px;color:#1a1a22;right:340.80px;transform:scaleX(0.9114);transform-origin:right top;">0.00</div>
<div class="t g" style="top:561.00px;font-size:9.6px;line-height:10.72px;color:#1a1a22;right:277.80px;transform:scaleX(0.8937);transform-origin:right top;">25,000.00</div>
<div class="t g" style="top:561.00px;font-size:9.6px;line-height:10.72px;color:#1a1a22;left:856.20px;transform:scaleX(0.8660);transform-origin:left top;">Approved</div>
<div class="t g" style="top:561.00px;font-size:9.6px;line-height:10.72px;color:#e8202a;left:910.20px;transform:scaleX(0.8713);transform-origin:left top;">Invalid</div>
<div class="t g" style="top:577.00px;font-size:9.6px;line-height:10.72px;color:#1a1a22;left:21.20px;transform:scaleX(0.8560);transform-origin:left top;">SB-000011</div>
<div class="t g" style="top:577.00px;font-size:9.6px;line-height:10.72px;color:#1a1a22;left:97.20px;transform:scaleX(0.8617);transform-origin:left top;">Self-Billed Invoice</div>
<div class="t g" style="top:577.00px;font-size:9.6px;line-height:10.72px;color:#1a1a22;left:183.20px;transform:scaleX(0.8800);transform-origin:left top;">09/10/2024</div>
<div class="t g" style="top:577.00px;font-size:9.6px;line-height:10.72px;color:#1a1a22;left:382.20px;transform:scaleX(0.7951);transform-origin:left top;">YONG SIEW YOONG</div>
<div class="t g" style="top:577.00px;font-size:9.6px;line-height:10.72px;color:#1a1a22;left:564.20px;transform:scaleX(0.7900);transform-origin:left top;">MYR</div>
<div class="t g" style="top:577.00px;font-size:9.6px;line-height:10.72px;color:#1a1a22;right:395.80px;transform:scaleX(0.8957);transform-origin:right top;">3,000.00</div>
<div class="t g" style="top:577.00px;font-size:9.6px;line-height:10.72px;color:#1a1a22;right:340.80px;transform:scaleX(0.9114);transform-origin:right top;">0.00</div>
<div class="t g" style="top:577.00px;font-size:9.6px;line-height:10.72px;color:#1a1a22;right:277.80px;transform:scaleX(0.8957);transform-origin:right top;">3,000.00</div>
<div class="t g" style="top:577.00px;font-size:9.6px;line-height:10.72px;color:#1a1a22;left:856.20px;transform:scaleX(0.8660);transform-origin:left top;">Approved</div>
<div class="t g" style="top:577.00px;font-size:9.6px;line-height:10.72px;color:#1a1a22;left:910.20px;transform:scaleX(0.8530);transform-origin:left top;">Valid</div>
<div class="t g" style="top:577.00px;font-size:9.6px;line-height:10.72px;color:#1a1a22;left:994.20px;transform:scaleX(0.8383);transform-origin:left top;">BMSMTS0R...</div>
<div class="t g" style="top:594.00px;font-size:9.6px;line-height:10.72px;color:#1a1a22;left:21.20px;transform:scaleX(0.8560);transform-origin:left top;">SB-000010</div>
<div class="t g" style="top:594.00px;font-size:9.6px;line-height:10.72px;color:#1a1a22;left:97.20px;transform:scaleX(0.8617);transform-origin:left top;">Self-Billed Invoice</div>
<div class="t g" style="top:594.00px;font-size:9.6px;line-height:10.72px;color:#1a1a22;left:183.20px;transform:scaleX(0.8800);transform-origin:left top;">09/10/2024</div>
<div class="t g" style="top:594.00px;font-size:9.6px;line-height:10.72px;color:#1a1a22;left:382.20px;transform:scaleX(0.7951);transform-origin:left top;">YONG SIEW YOONG</div>
<div class="t g" style="top:594.00px;font-size:9.6px;line-height:10.72px;color:#1a1a22;left:564.20px;transform:scaleX(0.7900);transform-origin:left top;">MYR</div>
<div class="t g" style="top:594.00px;font-size:9.6px;line-height:10.72px;color:#1a1a22;right:395.80px;transform:scaleX(0.9000);transform-origin:right top;">100.00</div>
<div class="t g" style="top:594.00px;font-size:9.6px;line-height:10.72px;color:#1a1a22;right:340.80px;transform:scaleX(0.9114);transform-origin:right top;">0.00</div>
<div class="t g" style="top:594.00px;font-size:9.6px;line-height:10.72px;color:#1a1a22;right:277.80px;transform:scaleX(0.9000);transform-origin:right top;">100.00</div>
<div class="t g" style="top:594.00px;font-size:9.6px;line-height:10.72px;color:#1a1a22;left:856.20px;transform:scaleX(0.8660);transform-origin:left top;">Approved</div>
<div class="t g" style="top:594.00px;font-size:9.6px;line-height:10.72px;color:#1a1a22;left:910.20px;transform:scaleX(0.8530);transform-origin:left top;">Valid</div>
<div class="t g" style="top:594.00px;font-size:9.6px;line-height:10.72px;color:#1a1a22;left:994.20px;transform:scaleX(0.8451);transform-origin:left top;">CPPCK1F6J...</div>
<div class="t g" style="top:610.00px;font-size:9.6px;line-height:10.72px;color:#1a1a22;left:21.20px;transform:scaleX(0.8560);transform-origin:left top;">SB-000009</div>
<div class="t g" style="top:610.00px;font-size:9.6px;line-height:10.72px;color:#1a1a22;left:97.20px;transform:scaleX(0.8617);transform-origin:left top;">Self-Billed Invoice</div>
<div class="t g" style="top:610.00px;font-size:9.6px;line-height:10.72px;color:#1a1a22;left:183.20px;transform:scaleX(0.8800);transform-origin:left top;">09/10/2024</div>
<div class="t g" style="top:610.00px;font-size:9.6px;line-height:10.72px;color:#1a1a22;left:267.20px;transform:scaleX(0.8800);transform-origin:left top;">2225</div>
<div class="t g" style="top:610.00px;font-size:9.6px;line-height:10.72px;color:#1a1a22;left:382.20px;transform:scaleX(0.7900);transform-origin:left top;">OVERSEA</div>
<div class="t g" style="top:610.00px;font-size:9.6px;line-height:10.72px;color:#1a1a22;left:564.20px;transform:scaleX(0.7900);transform-origin:left top;">USD</div>
<div class="t g" style="top:610.00px;font-size:9.6px;line-height:10.72px;color:#1a1a22;right:395.80px;transform:scaleX(0.8937);transform-origin:right top;">40,000.00</div>
<div class="t g" style="top:610.00px;font-size:9.6px;line-height:10.72px;color:#1a1a22;right:340.80px;transform:scaleX(0.9114);transform-origin:right top;">0.00</div>
<div class="t g" style="top:610.00px;font-size:9.6px;line-height:10.72px;color:#1a1a22;right:277.80px;transform:scaleX(0.8937);transform-origin:right top;">40,000.00</div>
<div class="t g" style="top:610.00px;font-size:9.6px;line-height:10.72px;color:#1a1a22;left:856.20px;transform:scaleX(0.8660);transform-origin:left top;">Approved</div>
<div class="t g" style="top:610.00px;font-size:9.6px;line-height:10.72px;color:#e8202a;left:910.20px;transform:scaleX(0.8713);transform-origin:left top;">Invalid</div>
<div class="t g" style="top:610.00px;font-size:9.6px;line-height:10.72px;color:#1a1a22;left:994.20px;transform:scaleX(0.8383);transform-origin:left top;">VQBA3QCC...</div>
<div class="t g" style="top:650.00px;font-size:9.6px;line-height:10.72px;color:#1a1a22;left:48.60px;transform:scaleX(0.8915);transform-origin:left top;-webkit-text-stroke:0.15px #1a1a22;">Record 1 of 32</div>
<div class="t" style="top:76.00px;font-size:32px;line-height:35.74px;color:#f52528;font-weight:bold;left:884.50px;transform:scaleX(1.1483);transform-origin:left top;z-index:6;-webkit-text-stroke:0.9px #f52528;">Status</div>
</body></html>
